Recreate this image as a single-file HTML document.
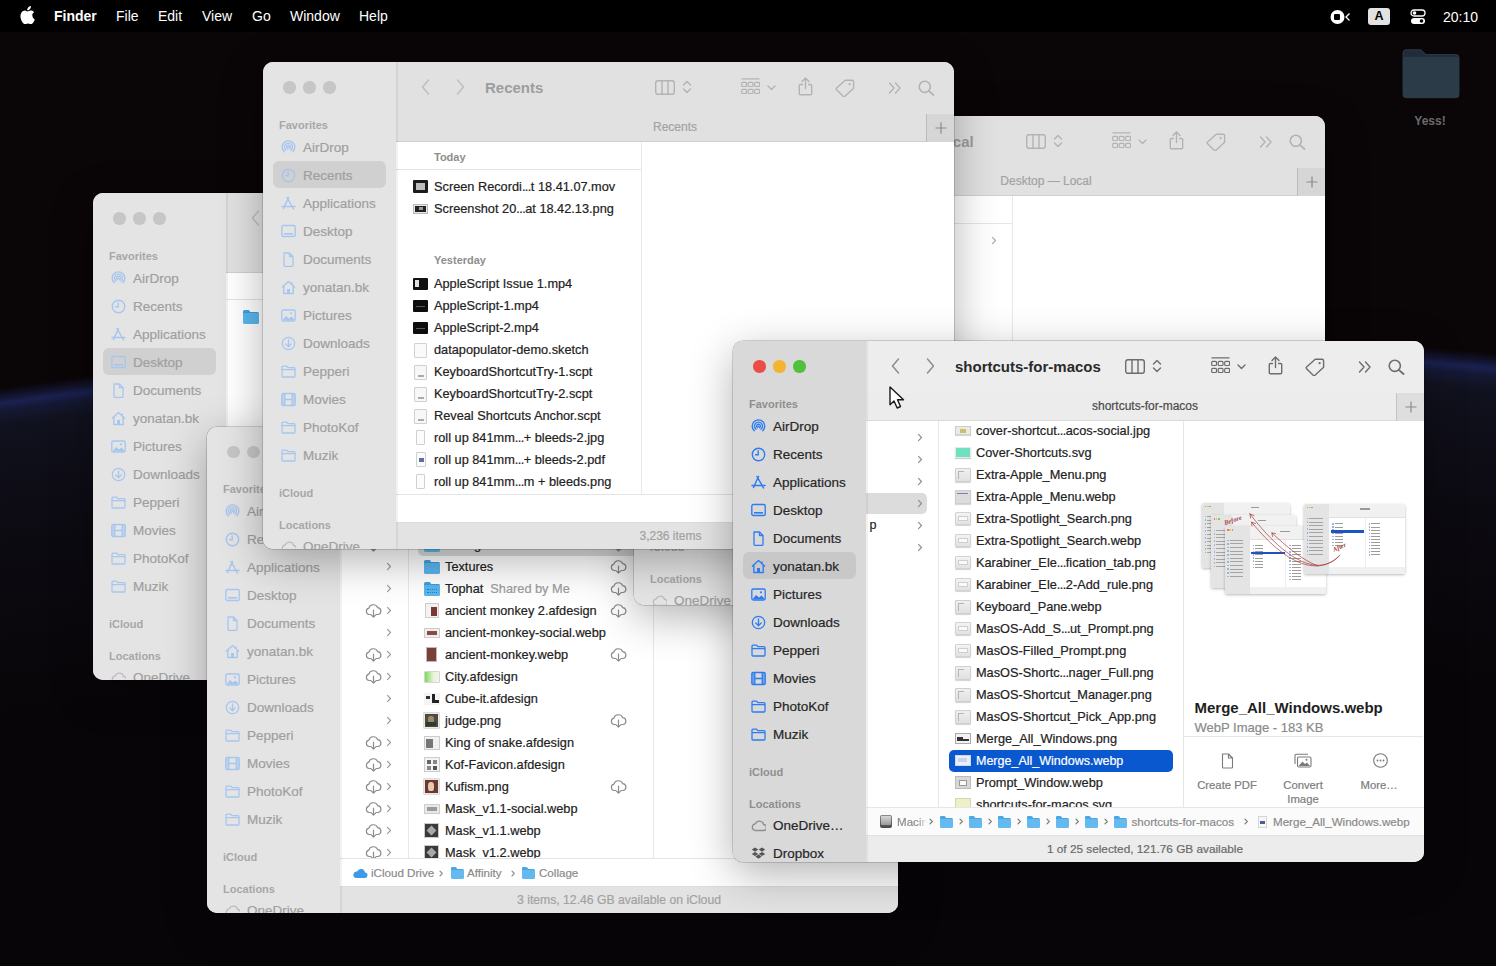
<!DOCTYPE html><html><head><meta charset="utf-8"><title>Finder</title><style>
*{box-sizing:border-box}
html,body{margin:0;padding:0}
body{width:1496px;height:966px;overflow:hidden;position:relative;font-family:"Liberation Sans", sans-serif;background:#0a0507;-webkit-text-stroke:0.2px currentColor}
.lbl,.ttl,[style*="font-weight:bold"],.mb span{-webkit-text-stroke:0}
.mb{position:absolute;left:0;top:0;width:1496px;height:32px;background:#000;color:#fff;font-size:14px;z-index:50}
.mb span{position:absolute;top:8px;line-height:16px;white-space:nowrap}
.win{position:absolute;border-radius:10px;overflow:hidden;box-shadow:0 0 0 0.5px rgba(0,0,0,0.3),0 12px 44px rgba(0,0,0,0.3);background:#fff}
.sb{position:absolute;left:0;top:0;width:134px;height:100%}
.lbl{position:absolute;left:16px;font-size:11px;font-weight:bold;line-height:14px;margin-top:-6.3px;white-space:nowrap}
.it{position:absolute;left:40px;font-size:13.5px;line-height:16px;margin-top:-7.3px;white-space:nowrap}
.sel{position:absolute;left:10px;width:113px;height:27px;border-radius:6px}
.light{position:absolute;top:19px;width:12.5px;height:12.5px;border-radius:50%}
.main{position:absolute;left:133px;top:0}
.tb{position:absolute;left:0;top:0;width:100%;height:52px}
.ttl{position:absolute;left:89px;top:17px;font-size:15px;font-weight:bold;line-height:17px;white-space:nowrap}
.tab{position:absolute;left:0;top:52px;width:100%;height:28px;border-bottom:1px solid rgba(0,0,0,0.08)}
.tabt{position:absolute;left:0;top:0;height:27px;line-height:27px;text-align:center;font-size:12px;white-space:nowrap}
.plus{position:absolute;right:0;top:0;width:28.5px;height:28px;border-left:1px solid rgba(0,0,0,0.12)}
.row{position:absolute;font-size:12.4px;line-height:16px;margin-top:-8px;white-space:nowrap;color:#222}
.fi{position:absolute;width:16px;height:13px;margin-top:-6.5px;border-radius:1.5px}
.colsep{position:absolute;top:80px;width:1px;background:#e6e6e6}
.pathbar{position:absolute;left:0;width:100%;height:28px;background:#fff;border-top:1px solid #e5e5e5}
.status{position:absolute;left:0;width:100%;height:27px;border-top:1px solid #e0e0e0;text-align:center;font-size:12px;line-height:27px;white-space:nowrap}
.chev{position:absolute}
</style></head><body>
<div style="position:absolute;left:0;top:0;width:1496px;height:966px;background:radial-gradient(circle at 899px 6863px, #080508 0px, #080508 6200px, #0c0a11 6380px, #0f0f1a 6470px, #11121f 6500px, #151833 6514px, #1a2150 6522px, #141633 6527px, #0a0507 6537px)"></div>
<div class="mb">
<svg style="position:absolute;left:19px;top:6px;" width="16" height="18" viewBox="0 0 16 18" fill="none"><path fill="#fff" d="M13.2 9.6c0-2.2 1.8-3.2 1.9-3.3-1-1.5-2.6-1.7-3.2-1.7-1.4-.1-2.6.8-3.3.8-.7 0-1.7-.8-2.8-.8C4.4 4.6 3 5.5 2.2 6.9c-1.6 2.7-.4 6.8 1.1 9 .8 1.1 1.6 2.3 2.8 2.3 1.1 0 1.5-.7 2.9-.7 1.3 0 1.7.7 2.9.7 1.2 0 1.9-1.1 2.700-2.200.8-1.200 1.200-2.400 1.200-2.500 0 0-2.300-.9-2.400-3.900zM11 3c.6-.8 1-1.8.9-2.900-.9 0-2 .6-2.700 1.400-.6.700-1.100 1.800-1 2.800 1 .1 2.100-.5 2.800-1.300z"/></svg>
<span style="left:54px;font-weight:bold">Finder</span>
<span style="left:116px">File</span>
<span style="left:158px">Edit</span>
<span style="left:202px">View</span>
<span style="left:252px">Go</span>
<span style="left:290px">Window</span>
<span style="left:359px">Help</span>
<svg style="position:absolute;left:1330px;top:8.7px;" width="22" height="16" viewBox="0 0 22 16" fill="none"><circle cx="7.5" cy="8" r="7" fill="#fff"/><rect x="4" y="5" width="6" height="6" rx="1" fill="#000"/><path d="M19.5 4.5L16 8L19.5 11.5" stroke="#fff" stroke-width="1.3" fill="none"/></svg>
<div style="position:absolute;left:1368px;top:8.3px;width:22px;height:16.5px;background:#e2e2e2;border-radius:3px;color:#000;font-weight:bold;font-size:12.5px;line-height:17px;text-align:center">A</div>
<svg style="position:absolute;left:1410px;top:8.7px;" width="16" height="16" viewBox="0 0 16 16" fill="none"><rect x="1" y="1" width="14" height="6" rx="3" stroke="#fff" stroke-width="1.3" fill="none"/><circle cx="4.5" cy="4" r="1.8" fill="#fff"/><rect x="1" y="9" width="14" height="6" rx="3" fill="#fff"/><circle cx="11.5" cy="12" r="1.8" fill="#000"/></svg>
<span style="left:1443px;top:9px">20:10</span>
</div>
<svg style="position:absolute;left:1401px;top:45.5px" width="60" height="56" viewBox="0 0 60 52" preserveAspectRatio="none"><path d="M2 6.5A3 3 0 0 1 5 3.5H20L25 8H55A3 3 0 0 1 58 11V45A3 3 0 0 1 55 48H5A3 3 0 0 1 2 45Z" fill="#1f2d3a" stroke="#34414c" stroke-width="0.8"/><path d="M2 13A3 3 0 0 1 5 10H55A3 3 0 0 1 58 13V45A3 3 0 0 1 55 48H5A3 3 0 0 1 2 45Z" fill="#2b3b48"/></svg>
<div style="position:absolute;left:1400px;top:114px;width:60px;text-align:center;color:#6a6a6a;font-weight:bold;font-size:12px;line-height:14px">Yess!</div>
<div class="win" style="left:93px;top:193px;width:690px;height:487px;z-index:1"><div class="sb" style="background:#e4e4e4"><div class="lbl" style="top:62px;color:#a7a7a7">Favorites</div><svg style="position:absolute;left:18px;top:77.5px;" width="15" height="15" viewBox="0 0 15 15" fill="none"><g stroke="#a6c6ef" stroke-width="1.4" stroke-linecap="round"><path d="M3.2 11.8 A6.3 6.3 0 1 1 11.8 11.8"/><path d="M5 10.2 A4 4 0 1 1 10 10.2"/><path d="M6.5 8.7 A1.9 1.9 0 1 1 8.5 8.7"/></g><circle cx="7.5" cy="7.3" r="0.9" fill="#a6c6ef"/></svg><div class="it" style="top:85px;color:#9f9f9f">AirDrop</div><svg style="position:absolute;left:18px;top:105.5px;" width="15" height="15" viewBox="0 0 15 15" fill="none"><g stroke="#a6c6ef" stroke-width="1.4" stroke-linecap="round"><circle cx="7.5" cy="7.5" r="6.2"/><path d="M7.2 3.8V7.7H4.6"/></g></svg><div class="it" style="top:113px;color:#9f9f9f">Recents</div><svg style="position:absolute;left:18px;top:133.5px;" width="15" height="15" viewBox="0 0 15 15" fill="none"><g stroke="#a6c6ef" stroke-width="1.5" stroke-linecap="round"><path d="M7.5 1.5L2.5 12.5"/><path d="M6 1.5L12.5 13"/><path d="M1 10.5H14"/></g></svg><div class="it" style="top:141px;color:#9f9f9f">Applications</div><div class="sel" style="top:155px;background:#d0d0d0"></div><svg style="position:absolute;left:18px;top:161.5px;" width="15" height="15" viewBox="0 0 15 15" fill="none"><g stroke="#a6c6ef" stroke-width="1.4"><rect x="0.8" y="1.5" width="13.4" height="11" rx="1.5"/></g><rect x="3" y="9" width="9" height="1.6" fill="#a6c6ef"/></svg><div class="it" style="top:169px;color:#9f9f9f">Desktop</div><svg style="position:absolute;left:18px;top:189.5px;" width="15" height="15" viewBox="0 0 15 15" fill="none"><g stroke="#a6c6ef" stroke-width="1.3" stroke-linejoin="round"><path d="M3 1H8.5L12 4.5V13.5A0.8 0.8 0 0 1 11.2 14.3H3.8A0.8 0.8 0 0 1 3 13.5Z"/><path d="M8.5 1V4.5H12"/></g></svg><div class="it" style="top:197px;color:#9f9f9f">Documents</div><svg style="position:absolute;left:18px;top:217.5px;" width="15" height="15" viewBox="0 0 15 15" fill="none"><g stroke="#a6c6ef" stroke-width="1.4" stroke-linejoin="round"><path d="M1 7.5L7.5 1.5L14 7.5"/><path d="M2.8 6V13.5H12.2V6"/><path d="M11 2.5V4.5"/></g><rect x="6" y="9" width="3" height="4.5" fill="#a6c6ef"/></svg><div class="it" style="top:225px;color:#9f9f9f">yonatan.bk</div><svg style="position:absolute;left:18px;top:245.5px;" width="15" height="15" viewBox="0 0 15 15" fill="none"><g stroke="#a6c6ef" stroke-width="1.3"><rect x="0.8" y="2" width="13.4" height="11" rx="1.5"/></g><path d="M1.5 12.3L5 8L8 10.5L10.5 8.5L13.5 11.5V12.3Z" fill="#a6c6ef"/><circle cx="10" cy="5.3" r="1.1" fill="#a6c6ef"/></svg><div class="it" style="top:253px;color:#9f9f9f">Pictures</div><svg style="position:absolute;left:18px;top:273.5px;" width="15" height="15" viewBox="0 0 15 15" fill="none"><g stroke="#a6c6ef" stroke-width="1.3" stroke-linecap="round"><circle cx="7.5" cy="7.5" r="6.2"/><path d="M7.5 3.8V10.5"/><path d="M4.8 8L7.5 10.7L10.2 8"/></g></svg><div class="it" style="top:281px;color:#9f9f9f">Downloads</div><svg style="position:absolute;left:18px;top:301.5px;" width="15" height="15" viewBox="0 0 15 15" fill="none"><g stroke="#a6c6ef" stroke-width="1.3" stroke-linejoin="round"><path d="M1 3.2A1 1 0 0 1 2 2.2H5.6L7 3.6H13A1 1 0 0 1 14 4.6V12A1 1 0 0 1 13 13H2A1 1 0 0 1 1 12Z"/><path d="M1 5.6H14"/></g></svg><div class="it" style="top:309px;color:#9f9f9f">Pepperi</div><svg style="position:absolute;left:18px;top:329.5px;" width="15" height="15" viewBox="0 0 15 15" fill="none"><g stroke="#a6c6ef" stroke-width="1.3"><rect x="0.8" y="1.5" width="13.4" height="12" rx="1.2"/><path d="M3.8 1.5V13.5M11.2 1.5V13.5M3.8 7.5H11.2"/></g><rect x="0.8" y="1.5" width="3" height="12" fill="#a6c6ef" opacity="0.6"/><rect x="11.2" y="1.5" width="3" height="12" fill="#a6c6ef" opacity="0.6"/></svg><div class="it" style="top:337px;color:#9f9f9f">Movies</div><svg style="position:absolute;left:18px;top:357.5px;" width="15" height="15" viewBox="0 0 15 15" fill="none"><g stroke="#a6c6ef" stroke-width="1.3" stroke-linejoin="round"><path d="M1 3.2A1 1 0 0 1 2 2.2H5.6L7 3.6H13A1 1 0 0 1 14 4.6V12A1 1 0 0 1 13 13H2A1 1 0 0 1 1 12Z"/><path d="M1 5.6H14"/></g></svg><div class="it" style="top:365px;color:#9f9f9f">PhotoKof</div><svg style="position:absolute;left:18px;top:385.5px;" width="15" height="15" viewBox="0 0 15 15" fill="none"><g stroke="#a6c6ef" stroke-width="1.3" stroke-linejoin="round"><path d="M1 3.2A1 1 0 0 1 2 2.2H5.6L7 3.6H13A1 1 0 0 1 14 4.6V12A1 1 0 0 1 13 13H2A1 1 0 0 1 1 12Z"/><path d="M1 5.6H14"/></g></svg><div class="it" style="top:393px;color:#9f9f9f">Muzik</div><div class="lbl" style="top:430px;color:#a7a7a7">iCloud</div><div class="lbl" style="top:462px;color:#a7a7a7">Locations</div><svg style="position:absolute;left:18px;top:476.5px;" width="15" height="15" viewBox="0 0 15 15" fill="none"><g stroke="#bdbdbd" stroke-width="1.3" stroke-linejoin="round"><path d="M4 12.5H12.3A3 3 0 0 0 12.6 6.5A4.3 4.3 0 0 0 4.4 5.8A3.4 3.4 0 0 0 4 12.5Z"/></g></svg><div class="it" style="top:484px;color:#9f9f9f">OneDrive</div><svg style="position:absolute;left:18px;top:504.5px;" width="15" height="15" viewBox="0 0 15 15" fill="none"><g fill="#bbb"><path d="M4 1.5L0.8 3.6L4 5.7L7.3 3.6Z"/><path d="M11 1.5L7.7 3.6L11 5.7L14.2 3.6Z"/><path d="M4 5.9L0.8 8L4 10.1L7.3 8Z"/><path d="M11 5.9L7.7 8L11 10.1L14.2 8Z"/><path d="M7.5 8.5L4.3 10.6L7.5 12.7L10.7 10.6Z"/></g></svg><div class="it" style="top:512px;color:#9f9f9f">Dropbox</div></div><div class="light" style="left:20px;background:#c6c6c6"></div><div class="light" style="left:40px;background:#c6c6c6"></div><div class="light" style="left:60px;background:#c6c6c6"></div><div class="main" style="width:557px;height:487px"><div style="position:absolute;left:0;top:0;width:2px;height:100%;background:rgba(0,0,0,0.055);z-index:20"></div><div class="tb" style="background:#e1e1e1"><svg style="position:absolute;left:25px;top:17px;" width="9" height="16" viewBox="0 0 9 16" fill="none"><path d="M7.5 1L1.5 8L7.5 15" stroke="#bdbdbd" stroke-width="1.4" stroke-linecap="round" stroke-linejoin="round"/></svg><svg style="position:absolute;left:60px;top:17px;" width="9" height="16" viewBox="0 0 9 16" fill="none"><path d="M1.5 1L7.5 8L1.5 15" stroke="#bdbdbd" stroke-width="1.4" stroke-linecap="round" stroke-linejoin="round"/></svg><div class="ttl" style="color:#9d9d9d;margin-left:0px">Desktop</div><div style="position:absolute;left:556px;top:25px"><svg style="position:absolute;left:-298px;top:-7.5px;" width="20" height="15" viewBox="0 0 20 15" fill="none"><rect x="0.7" y="0.7" width="18.6" height="13.6" rx="2.2" stroke="#b3b3b3" stroke-width="1.4"/><path d="M7 0.7V14.3M13 0.7V14.3" stroke="#b3b3b3" stroke-width="1.4"/></svg><svg style="position:absolute;left:-271px;top:-7px;" width="10" height="14" viewBox="0 0 10 14" fill="none"><path d="M1.5 5L5 1.5L8.5 5M1.5 9L5 12.5L8.5 9" stroke="#b3b3b3" stroke-width="1.4" stroke-linecap="round" stroke-linejoin="round"/></svg><svg style="position:absolute;left:-212px;top:-9.5px;" width="19" height="17" viewBox="0 0 19 17" fill="none"><path d="M0.5 0.8H18.5" stroke="#b3b3b3" stroke-width="1.3"/><rect x="0.7" y="4.3" width="4.8" height="4.2" rx="1" stroke="#b3b3b3" stroke-width="1.2"/><rect x="7.2" y="4.3" width="4.8" height="4.2" rx="1" stroke="#b3b3b3" stroke-width="1.2"/><rect x="13.7" y="4.3" width="4.8" height="4.2" rx="1" stroke="#b3b3b3" stroke-width="1.2"/><rect x="0.7" y="11.3" width="4.8" height="4.2" rx="1" stroke="#b3b3b3" stroke-width="1.2"/><rect x="7.2" y="11.3" width="4.8" height="4.2" rx="1" stroke="#b3b3b3" stroke-width="1.2"/><rect x="13.7" y="11.3" width="4.8" height="4.2" rx="1" stroke="#b3b3b3" stroke-width="1.2"/></svg><svg style="position:absolute;left:-186px;top:-2.5px;" width="9" height="6" viewBox="0 0 9 6" fill="none"><path d="M1 1L4.5 4.5L8 1" stroke="#b3b3b3" stroke-width="1.4" stroke-linecap="round" stroke-linejoin="round"/></svg><svg style="position:absolute;left:-155px;top:-10.5px;" width="15" height="19" viewBox="0 0 15 19" fill="none"><path d="M7.5 1V11.5M4 4.5L7.5 1L11 4.5" stroke="#b3b3b3" stroke-width="1.4" stroke-linecap="round" stroke-linejoin="round"/><path d="M5 7.5H2.3A1 1 0 0 0 1.3 8.5V16.8A1 1 0 0 0 2.3 17.8H12.7A1 1 0 0 0 13.7 16.8V8.5A1 1 0 0 0 12.7 7.5H10" stroke="#b3b3b3" stroke-width="1.4"/></svg><svg style="position:absolute;left:-118px;top:-8.5px;" width="20" height="18" viewBox="0 0 20 18" fill="none"><path d="M10.2 1.2H17A1.6 1.6 0 0 1 18.6 2.8V9.3L10 17.3A1.3 1.3 0 0 1 8.2 17.3L1.6 10.7A1.3 1.3 0 0 1 1.6 8.9Z" stroke="#b3b3b3" stroke-width="1.4" stroke-linejoin="round"/><circle cx="14.6" cy="5.2" r="1.1" fill="#b3b3b3"/></svg><svg style="position:absolute;left:-65px;top:-5.5px;" width="14" height="12" viewBox="0 0 14 12" fill="none"><path d="M1.5 1L6 6L1.5 11M7.5 1L12 6L7.5 11" stroke="#b3b3b3" stroke-width="1.4" stroke-linecap="round" stroke-linejoin="round"/></svg><svg style="position:absolute;left:-35px;top:-7.5px;" width="17" height="16" viewBox="0 0 17 16" fill="none"><circle cx="6.8" cy="6.8" r="5.6" stroke="#b3b3b3" stroke-width="1.6"/><path d="M10.8 10.8L15.5 15" stroke="#b3b3b3" stroke-width="1.8" stroke-linecap="round"/></svg></div></div><div class="tab" style="background:#e1e1e1"><div class="tabt" style="width:557px;color:#a3a3a3">Desktop</div><div class="plus" style="background:#d6d6d6"><svg style="position:absolute;left:8px;top:8px;" width="12" height="12" viewBox="0 0 12 12" fill="none"><path d="M6 0.5V11.5M0.5 6H11.5" stroke="#8a8a8a" stroke-width="1.2"/></svg></div></div><div style="position:absolute;left:0;top:80px;width:100%;height:352px;background:#fff"></div><div style="position:absolute;left:0;top:106px;width:245px;height:1px;background:#e3e3e3"></div><div style="position:absolute;left:17px;top:117px;width:16px;height:14px"><div style="position:absolute;left:0;top:0;width:7px;height:4px;background:#3fa2e0;border-radius:1.5px 2px 0 0"></div><div style="position:absolute;left:0;top:2px;width:16px;height:12px;background:#5ab6ee;border-radius:1.5px;border-top:1.5px solid #3c9ddb"></div></div></div></div>
<div class="win" style="left:207px;top:426.5px;width:691px;height:486.5px;z-index:2"><div class="sb" style="background:#e4e4e4"><div class="lbl" style="top:62px;color:#a7a7a7">Favorites</div><svg style="position:absolute;left:18px;top:77.5px;" width="15" height="15" viewBox="0 0 15 15" fill="none"><g stroke="#a6c6ef" stroke-width="1.4" stroke-linecap="round"><path d="M3.2 11.8 A6.3 6.3 0 1 1 11.8 11.8"/><path d="M5 10.2 A4 4 0 1 1 10 10.2"/><path d="M6.5 8.7 A1.9 1.9 0 1 1 8.5 8.7"/></g><circle cx="7.5" cy="7.3" r="0.9" fill="#a6c6ef"/></svg><div class="it" style="top:85px;color:#9f9f9f">AirDrop</div><svg style="position:absolute;left:18px;top:105.5px;" width="15" height="15" viewBox="0 0 15 15" fill="none"><g stroke="#a6c6ef" stroke-width="1.4" stroke-linecap="round"><circle cx="7.5" cy="7.5" r="6.2"/><path d="M7.2 3.8V7.7H4.6"/></g></svg><div class="it" style="top:113px;color:#9f9f9f">Recents</div><svg style="position:absolute;left:18px;top:133.5px;" width="15" height="15" viewBox="0 0 15 15" fill="none"><g stroke="#a6c6ef" stroke-width="1.5" stroke-linecap="round"><path d="M7.5 1.5L2.5 12.5"/><path d="M6 1.5L12.5 13"/><path d="M1 10.5H14"/></g></svg><div class="it" style="top:141px;color:#9f9f9f">Applications</div><svg style="position:absolute;left:18px;top:161.5px;" width="15" height="15" viewBox="0 0 15 15" fill="none"><g stroke="#a6c6ef" stroke-width="1.4"><rect x="0.8" y="1.5" width="13.4" height="11" rx="1.5"/></g><rect x="3" y="9" width="9" height="1.6" fill="#a6c6ef"/></svg><div class="it" style="top:169px;color:#9f9f9f">Desktop</div><svg style="position:absolute;left:18px;top:189.5px;" width="15" height="15" viewBox="0 0 15 15" fill="none"><g stroke="#a6c6ef" stroke-width="1.3" stroke-linejoin="round"><path d="M3 1H8.5L12 4.5V13.5A0.8 0.8 0 0 1 11.2 14.3H3.8A0.8 0.8 0 0 1 3 13.5Z"/><path d="M8.5 1V4.5H12"/></g></svg><div class="it" style="top:197px;color:#9f9f9f">Documents</div><svg style="position:absolute;left:18px;top:217.5px;" width="15" height="15" viewBox="0 0 15 15" fill="none"><g stroke="#a6c6ef" stroke-width="1.4" stroke-linejoin="round"><path d="M1 7.5L7.5 1.5L14 7.5"/><path d="M2.8 6V13.5H12.2V6"/><path d="M11 2.5V4.5"/></g><rect x="6" y="9" width="3" height="4.5" fill="#a6c6ef"/></svg><div class="it" style="top:225px;color:#9f9f9f">yonatan.bk</div><svg style="position:absolute;left:18px;top:245.5px;" width="15" height="15" viewBox="0 0 15 15" fill="none"><g stroke="#a6c6ef" stroke-width="1.3"><rect x="0.8" y="2" width="13.4" height="11" rx="1.5"/></g><path d="M1.5 12.3L5 8L8 10.5L10.5 8.5L13.5 11.5V12.3Z" fill="#a6c6ef"/><circle cx="10" cy="5.3" r="1.1" fill="#a6c6ef"/></svg><div class="it" style="top:253px;color:#9f9f9f">Pictures</div><svg style="position:absolute;left:18px;top:273.5px;" width="15" height="15" viewBox="0 0 15 15" fill="none"><g stroke="#a6c6ef" stroke-width="1.3" stroke-linecap="round"><circle cx="7.5" cy="7.5" r="6.2"/><path d="M7.5 3.8V10.5"/><path d="M4.8 8L7.5 10.7L10.2 8"/></g></svg><div class="it" style="top:281px;color:#9f9f9f">Downloads</div><svg style="position:absolute;left:18px;top:301.5px;" width="15" height="15" viewBox="0 0 15 15" fill="none"><g stroke="#a6c6ef" stroke-width="1.3" stroke-linejoin="round"><path d="M1 3.2A1 1 0 0 1 2 2.2H5.6L7 3.6H13A1 1 0 0 1 14 4.6V12A1 1 0 0 1 13 13H2A1 1 0 0 1 1 12Z"/><path d="M1 5.6H14"/></g></svg><div class="it" style="top:309px;color:#9f9f9f">Pepperi</div><svg style="position:absolute;left:18px;top:329.5px;" width="15" height="15" viewBox="0 0 15 15" fill="none"><g stroke="#a6c6ef" stroke-width="1.3"><rect x="0.8" y="1.5" width="13.4" height="12" rx="1.2"/><path d="M3.8 1.5V13.5M11.2 1.5V13.5M3.8 7.5H11.2"/></g><rect x="0.8" y="1.5" width="3" height="12" fill="#a6c6ef" opacity="0.6"/><rect x="11.2" y="1.5" width="3" height="12" fill="#a6c6ef" opacity="0.6"/></svg><div class="it" style="top:337px;color:#9f9f9f">Movies</div><svg style="position:absolute;left:18px;top:357.5px;" width="15" height="15" viewBox="0 0 15 15" fill="none"><g stroke="#a6c6ef" stroke-width="1.3" stroke-linejoin="round"><path d="M1 3.2A1 1 0 0 1 2 2.2H5.6L7 3.6H13A1 1 0 0 1 14 4.6V12A1 1 0 0 1 13 13H2A1 1 0 0 1 1 12Z"/><path d="M1 5.6H14"/></g></svg><div class="it" style="top:365px;color:#9f9f9f">PhotoKof</div><svg style="position:absolute;left:18px;top:385.5px;" width="15" height="15" viewBox="0 0 15 15" fill="none"><g stroke="#a6c6ef" stroke-width="1.3" stroke-linejoin="round"><path d="M1 3.2A1 1 0 0 1 2 2.2H5.6L7 3.6H13A1 1 0 0 1 14 4.6V12A1 1 0 0 1 13 13H2A1 1 0 0 1 1 12Z"/><path d="M1 5.6H14"/></g></svg><div class="it" style="top:393px;color:#9f9f9f">Muzik</div><div class="lbl" style="top:430px;color:#a7a7a7">iCloud</div><div class="lbl" style="top:462px;color:#a7a7a7">Locations</div><svg style="position:absolute;left:18px;top:476.5px;" width="15" height="15" viewBox="0 0 15 15" fill="none"><g stroke="#bdbdbd" stroke-width="1.3" stroke-linejoin="round"><path d="M4 12.5H12.3A3 3 0 0 0 12.6 6.5A4.3 4.3 0 0 0 4.4 5.8A3.4 3.4 0 0 0 4 12.5Z"/></g></svg><div class="it" style="top:484px;color:#9f9f9f">OneDrive</div><svg style="position:absolute;left:18px;top:504.5px;" width="15" height="15" viewBox="0 0 15 15" fill="none"><g fill="#bbb"><path d="M4 1.5L0.8 3.6L4 5.7L7.3 3.6Z"/><path d="M11 1.5L7.7 3.6L11 5.7L14.2 3.6Z"/><path d="M4 5.9L0.8 8L4 10.1L7.3 8Z"/><path d="M11 5.9L7.7 8L11 10.1L14.2 8Z"/><path d="M7.5 8.5L4.3 10.6L7.5 12.7L10.7 10.6Z"/></g></svg><div class="it" style="top:512px;color:#9f9f9f">Dropbox</div></div><div class="light" style="left:20px;background:#c6c6c6"></div><div class="light" style="left:40px;background:#c6c6c6"></div><div class="light" style="left:60px;background:#c6c6c6"></div><div class="main" style="width:558px;height:486.5px"><div style="position:absolute;left:0;top:0;width:2px;height:100%;background:rgba(0,0,0,0.055);z-index:20"></div><div class="tb" style="background:#e1e1e1"><svg style="position:absolute;left:25px;top:17px;" width="9" height="16" viewBox="0 0 9 16" fill="none"><path d="M7.5 1L1.5 8L7.5 15" stroke="#bdbdbd" stroke-width="1.4" stroke-linecap="round" stroke-linejoin="round"/></svg><svg style="position:absolute;left:60px;top:17px;" width="9" height="16" viewBox="0 0 9 16" fill="none"><path d="M1.5 1L7.5 8L1.5 15" stroke="#bdbdbd" stroke-width="1.4" stroke-linecap="round" stroke-linejoin="round"/></svg><div class="ttl" style="color:#9d9d9d;margin-left:0px">Collage</div><div style="position:absolute;left:557px;top:25px"><svg style="position:absolute;left:-298px;top:-7.5px;" width="20" height="15" viewBox="0 0 20 15" fill="none"><rect x="0.7" y="0.7" width="18.6" height="13.6" rx="2.2" stroke="#b3b3b3" stroke-width="1.4"/><path d="M7 0.7V14.3M13 0.7V14.3" stroke="#b3b3b3" stroke-width="1.4"/></svg><svg style="position:absolute;left:-271px;top:-7px;" width="10" height="14" viewBox="0 0 10 14" fill="none"><path d="M1.5 5L5 1.5L8.5 5M1.5 9L5 12.5L8.5 9" stroke="#b3b3b3" stroke-width="1.4" stroke-linecap="round" stroke-linejoin="round"/></svg><svg style="position:absolute;left:-212px;top:-9.5px;" width="19" height="17" viewBox="0 0 19 17" fill="none"><path d="M0.5 0.8H18.5" stroke="#b3b3b3" stroke-width="1.3"/><rect x="0.7" y="4.3" width="4.8" height="4.2" rx="1" stroke="#b3b3b3" stroke-width="1.2"/><rect x="7.2" y="4.3" width="4.8" height="4.2" rx="1" stroke="#b3b3b3" stroke-width="1.2"/><rect x="13.7" y="4.3" width="4.8" height="4.2" rx="1" stroke="#b3b3b3" stroke-width="1.2"/><rect x="0.7" y="11.3" width="4.8" height="4.2" rx="1" stroke="#b3b3b3" stroke-width="1.2"/><rect x="7.2" y="11.3" width="4.8" height="4.2" rx="1" stroke="#b3b3b3" stroke-width="1.2"/><rect x="13.7" y="11.3" width="4.8" height="4.2" rx="1" stroke="#b3b3b3" stroke-width="1.2"/></svg><svg style="position:absolute;left:-186px;top:-2.5px;" width="9" height="6" viewBox="0 0 9 6" fill="none"><path d="M1 1L4.5 4.5L8 1" stroke="#b3b3b3" stroke-width="1.4" stroke-linecap="round" stroke-linejoin="round"/></svg><svg style="position:absolute;left:-155px;top:-10.5px;" width="15" height="19" viewBox="0 0 15 19" fill="none"><path d="M7.5 1V11.5M4 4.5L7.5 1L11 4.5" stroke="#b3b3b3" stroke-width="1.4" stroke-linecap="round" stroke-linejoin="round"/><path d="M5 7.5H2.3A1 1 0 0 0 1.3 8.5V16.8A1 1 0 0 0 2.3 17.8H12.7A1 1 0 0 0 13.7 16.8V8.5A1 1 0 0 0 12.7 7.5H10" stroke="#b3b3b3" stroke-width="1.4"/></svg><svg style="position:absolute;left:-118px;top:-8.5px;" width="20" height="18" viewBox="0 0 20 18" fill="none"><path d="M10.2 1.2H17A1.6 1.6 0 0 1 18.6 2.8V9.3L10 17.3A1.3 1.3 0 0 1 8.2 17.3L1.6 10.7A1.3 1.3 0 0 1 1.6 8.9Z" stroke="#b3b3b3" stroke-width="1.4" stroke-linejoin="round"/><circle cx="14.6" cy="5.2" r="1.1" fill="#b3b3b3"/></svg><svg style="position:absolute;left:-65px;top:-5.5px;" width="14" height="12" viewBox="0 0 14 12" fill="none"><path d="M1.5 1L6 6L1.5 11M7.5 1L12 6L7.5 11" stroke="#b3b3b3" stroke-width="1.4" stroke-linecap="round" stroke-linejoin="round"/></svg><svg style="position:absolute;left:-35px;top:-7.5px;" width="17" height="16" viewBox="0 0 17 16" fill="none"><circle cx="6.8" cy="6.8" r="5.6" stroke="#b3b3b3" stroke-width="1.6"/><path d="M10.8 10.8L15.5 15" stroke="#b3b3b3" stroke-width="1.8" stroke-linecap="round"/></svg></div></div><div class="tab" style="background:#e1e1e1"><div class="tabt" style="width:558px;color:#a3a3a3">Collage</div><div class="plus" style="background:#d6d6d6"><svg style="position:absolute;left:8px;top:8px;" width="12" height="12" viewBox="0 0 12 12" fill="none"><path d="M6 0.5V11.5M0.5 6H11.5" stroke="#8a8a8a" stroke-width="1.2"/></svg></div></div><div style="position:absolute;left:0;top:80px;width:100%;height:351.5px;background:#fff"></div><div style="position:absolute;left:68px;top:80px;width:1px;height:351.5px;background:#e8e8e8"></div><div style="position:absolute;left:313px;top:80px;width:1px;height:351.5px;background:#e8e8e8"></div><div style="position:absolute;left:78px;top:107px;width:228px;height:22px;border-radius:5px;background:#dcdcdc"></div><svg style="position:absolute;left:25px;top:88.5px;" width="17" height="15" viewBox="0 0 17 15" fill="none"><path d="M5.5 11.5H4.2A3.2 3.2 0 0 1 3.9 5.2A4.6 4.6 0 0 1 12.6 4.6A3.5 3.5 0 0 1 13.2 11.5H11.5" stroke="#8c8c8c" stroke-width="1.2" stroke-linecap="round" stroke-linejoin="round"/><path d="M8.5 7V14M6.2 11.8L8.5 14.1L10.8 11.8" stroke="#8c8c8c" stroke-width="1.2" stroke-linecap="round" stroke-linejoin="round"/></svg><svg style="position:absolute;left:46px;top:91.5px;" width="6" height="9" viewBox="0 0 6 9" fill="none"><path d="M1.5 1.3L4.5 4.5L1.5 7.7" stroke="#9a9a9a" stroke-width="1.1" stroke-linecap="round" stroke-linejoin="round"/></svg><svg style="position:absolute;left:25px;top:110.5px;" width="17" height="15" viewBox="0 0 17 15" fill="none"><path d="M5.5 11.5H4.2A3.2 3.2 0 0 1 3.9 5.2A4.6 4.6 0 0 1 12.6 4.6A3.5 3.5 0 0 1 13.2 11.5H11.5" stroke="#8c8c8c" stroke-width="1.2" stroke-linecap="round" stroke-linejoin="round"/><path d="M8.5 7V14M6.2 11.8L8.5 14.1L10.8 11.8" stroke="#8c8c8c" stroke-width="1.2" stroke-linecap="round" stroke-linejoin="round"/></svg><svg style="position:absolute;left:46px;top:113.5px;" width="6" height="9" viewBox="0 0 6 9" fill="none"><path d="M1.5 1.3L4.5 4.5L1.5 7.7" stroke="#9a9a9a" stroke-width="1.1" stroke-linecap="round" stroke-linejoin="round"/></svg><svg style="position:absolute;left:46px;top:135.5px;" width="6" height="9" viewBox="0 0 6 9" fill="none"><path d="M1.5 1.3L4.5 4.5L1.5 7.7" stroke="#9a9a9a" stroke-width="1.1" stroke-linecap="round" stroke-linejoin="round"/></svg><svg style="position:absolute;left:46px;top:157.5px;" width="6" height="9" viewBox="0 0 6 9" fill="none"><path d="M1.5 1.3L4.5 4.5L1.5 7.7" stroke="#9a9a9a" stroke-width="1.1" stroke-linecap="round" stroke-linejoin="round"/></svg><svg style="position:absolute;left:25px;top:176.5px;" width="17" height="15" viewBox="0 0 17 15" fill="none"><path d="M5.5 11.5H4.2A3.2 3.2 0 0 1 3.9 5.2A4.6 4.6 0 0 1 12.6 4.6A3.5 3.5 0 0 1 13.2 11.5H11.5" stroke="#8c8c8c" stroke-width="1.2" stroke-linecap="round" stroke-linejoin="round"/><path d="M8.5 7V14M6.2 11.8L8.5 14.1L10.8 11.8" stroke="#8c8c8c" stroke-width="1.2" stroke-linecap="round" stroke-linejoin="round"/></svg><svg style="position:absolute;left:46px;top:179.5px;" width="6" height="9" viewBox="0 0 6 9" fill="none"><path d="M1.5 1.3L4.5 4.5L1.5 7.7" stroke="#9a9a9a" stroke-width="1.1" stroke-linecap="round" stroke-linejoin="round"/></svg><svg style="position:absolute;left:46px;top:201.5px;" width="6" height="9" viewBox="0 0 6 9" fill="none"><path d="M1.5 1.3L4.5 4.5L1.5 7.7" stroke="#9a9a9a" stroke-width="1.1" stroke-linecap="round" stroke-linejoin="round"/></svg><svg style="position:absolute;left:25px;top:220.5px;" width="17" height="15" viewBox="0 0 17 15" fill="none"><path d="M5.5 11.5H4.2A3.2 3.2 0 0 1 3.9 5.2A4.6 4.6 0 0 1 12.6 4.6A3.5 3.5 0 0 1 13.2 11.5H11.5" stroke="#8c8c8c" stroke-width="1.2" stroke-linecap="round" stroke-linejoin="round"/><path d="M8.5 7V14M6.2 11.8L8.5 14.1L10.8 11.8" stroke="#8c8c8c" stroke-width="1.2" stroke-linecap="round" stroke-linejoin="round"/></svg><svg style="position:absolute;left:46px;top:223.5px;" width="6" height="9" viewBox="0 0 6 9" fill="none"><path d="M1.5 1.3L4.5 4.5L1.5 7.7" stroke="#9a9a9a" stroke-width="1.1" stroke-linecap="round" stroke-linejoin="round"/></svg><svg style="position:absolute;left:25px;top:242.5px;" width="17" height="15" viewBox="0 0 17 15" fill="none"><path d="M5.5 11.5H4.2A3.2 3.2 0 0 1 3.9 5.2A4.6 4.6 0 0 1 12.6 4.6A3.5 3.5 0 0 1 13.2 11.5H11.5" stroke="#8c8c8c" stroke-width="1.2" stroke-linecap="round" stroke-linejoin="round"/><path d="M8.5 7V14M6.2 11.8L8.5 14.1L10.8 11.8" stroke="#8c8c8c" stroke-width="1.2" stroke-linecap="round" stroke-linejoin="round"/></svg><svg style="position:absolute;left:46px;top:245.5px;" width="6" height="9" viewBox="0 0 6 9" fill="none"><path d="M1.5 1.3L4.5 4.5L1.5 7.7" stroke="#9a9a9a" stroke-width="1.1" stroke-linecap="round" stroke-linejoin="round"/></svg><svg style="position:absolute;left:46px;top:267.5px;" width="6" height="9" viewBox="0 0 6 9" fill="none"><path d="M1.5 1.3L4.5 4.5L1.5 7.7" stroke="#9a9a9a" stroke-width="1.1" stroke-linecap="round" stroke-linejoin="round"/></svg><svg style="position:absolute;left:46px;top:289.5px;" width="6" height="9" viewBox="0 0 6 9" fill="none"><path d="M1.5 1.3L4.5 4.5L1.5 7.7" stroke="#9a9a9a" stroke-width="1.1" stroke-linecap="round" stroke-linejoin="round"/></svg><svg style="position:absolute;left:25px;top:308.5px;" width="17" height="15" viewBox="0 0 17 15" fill="none"><path d="M5.5 11.5H4.2A3.2 3.2 0 0 1 3.9 5.2A4.6 4.6 0 0 1 12.6 4.6A3.5 3.5 0 0 1 13.2 11.5H11.5" stroke="#8c8c8c" stroke-width="1.2" stroke-linecap="round" stroke-linejoin="round"/><path d="M8.5 7V14M6.2 11.8L8.5 14.1L10.8 11.8" stroke="#8c8c8c" stroke-width="1.2" stroke-linecap="round" stroke-linejoin="round"/></svg><svg style="position:absolute;left:46px;top:311.5px;" width="6" height="9" viewBox="0 0 6 9" fill="none"><path d="M1.5 1.3L4.5 4.5L1.5 7.7" stroke="#9a9a9a" stroke-width="1.1" stroke-linecap="round" stroke-linejoin="round"/></svg><svg style="position:absolute;left:25px;top:330.5px;" width="17" height="15" viewBox="0 0 17 15" fill="none"><path d="M5.5 11.5H4.2A3.2 3.2 0 0 1 3.9 5.2A4.6 4.6 0 0 1 12.6 4.6A3.5 3.5 0 0 1 13.2 11.5H11.5" stroke="#8c8c8c" stroke-width="1.2" stroke-linecap="round" stroke-linejoin="round"/><path d="M8.5 7V14M6.2 11.8L8.5 14.1L10.8 11.8" stroke="#8c8c8c" stroke-width="1.2" stroke-linecap="round" stroke-linejoin="round"/></svg><svg style="position:absolute;left:46px;top:333.5px;" width="6" height="9" viewBox="0 0 6 9" fill="none"><path d="M1.5 1.3L4.5 4.5L1.5 7.7" stroke="#9a9a9a" stroke-width="1.1" stroke-linecap="round" stroke-linejoin="round"/></svg><svg style="position:absolute;left:25px;top:352.5px;" width="17" height="15" viewBox="0 0 17 15" fill="none"><path d="M5.5 11.5H4.2A3.2 3.2 0 0 1 3.9 5.2A4.6 4.6 0 0 1 12.6 4.6A3.5 3.5 0 0 1 13.2 11.5H11.5" stroke="#8c8c8c" stroke-width="1.2" stroke-linecap="round" stroke-linejoin="round"/><path d="M8.5 7V14M6.2 11.8L8.5 14.1L10.8 11.8" stroke="#8c8c8c" stroke-width="1.2" stroke-linecap="round" stroke-linejoin="round"/></svg><svg style="position:absolute;left:46px;top:355.5px;" width="6" height="9" viewBox="0 0 6 9" fill="none"><path d="M1.5 1.3L4.5 4.5L1.5 7.7" stroke="#9a9a9a" stroke-width="1.1" stroke-linecap="round" stroke-linejoin="round"/></svg><svg style="position:absolute;left:25px;top:374.5px;" width="17" height="15" viewBox="0 0 17 15" fill="none"><path d="M5.5 11.5H4.2A3.2 3.2 0 0 1 3.9 5.2A4.6 4.6 0 0 1 12.6 4.6A3.5 3.5 0 0 1 13.2 11.5H11.5" stroke="#8c8c8c" stroke-width="1.2" stroke-linecap="round" stroke-linejoin="round"/><path d="M8.5 7V14M6.2 11.8L8.5 14.1L10.8 11.8" stroke="#8c8c8c" stroke-width="1.2" stroke-linecap="round" stroke-linejoin="round"/></svg><svg style="position:absolute;left:46px;top:377.5px;" width="6" height="9" viewBox="0 0 6 9" fill="none"><path d="M1.5 1.3L4.5 4.5L1.5 7.7" stroke="#9a9a9a" stroke-width="1.1" stroke-linecap="round" stroke-linejoin="round"/></svg><svg style="position:absolute;left:25px;top:396.5px;" width="17" height="15" viewBox="0 0 17 15" fill="none"><path d="M5.5 11.5H4.2A3.2 3.2 0 0 1 3.9 5.2A4.6 4.6 0 0 1 12.6 4.6A3.5 3.5 0 0 1 13.2 11.5H11.5" stroke="#8c8c8c" stroke-width="1.2" stroke-linecap="round" stroke-linejoin="round"/><path d="M8.5 7V14M6.2 11.8L8.5 14.1L10.8 11.8" stroke="#8c8c8c" stroke-width="1.2" stroke-linecap="round" stroke-linejoin="round"/></svg><svg style="position:absolute;left:46px;top:399.5px;" width="6" height="9" viewBox="0 0 6 9" fill="none"><path d="M1.5 1.3L4.5 4.5L1.5 7.7" stroke="#9a9a9a" stroke-width="1.1" stroke-linecap="round" stroke-linejoin="round"/></svg><svg style="position:absolute;left:25px;top:418.5px;" width="17" height="15" viewBox="0 0 17 15" fill="none"><path d="M5.5 11.5H4.2A3.2 3.2 0 0 1 3.9 5.2A4.6 4.6 0 0 1 12.6 4.6A3.5 3.5 0 0 1 13.2 11.5H11.5" stroke="#8c8c8c" stroke-width="1.2" stroke-linecap="round" stroke-linejoin="round"/><path d="M8.5 7V14M6.2 11.8L8.5 14.1L10.8 11.8" stroke="#8c8c8c" stroke-width="1.2" stroke-linecap="round" stroke-linejoin="round"/></svg><svg style="position:absolute;left:46px;top:421.5px;" width="6" height="9" viewBox="0 0 6 9" fill="none"><path d="M1.5 1.3L4.5 4.5L1.5 7.7" stroke="#9a9a9a" stroke-width="1.1" stroke-linecap="round" stroke-linejoin="round"/></svg><div style="position:absolute;left:84px;top:89px;width:16px;height:14px"><div style="position:absolute;left:0;top:0;width:7px;height:4px;background:#3fa2e0;border-radius:1.5px 2px 0 0"></div><div style="position:absolute;left:0;top:2px;width:16px;height:12px;background:#5ab6ee;border-radius:1.5px;border-top:1.5px solid #3c9ddb"></div></div><div style="position:absolute;left:105px;top:87px;line-height:18px;font-size:12.75px;color:#222;font-weight:normal;white-space:nowrap;">Affinity</div><div style="position:absolute;left:84px;top:111px;width:16px;height:14px"><div style="position:absolute;left:0;top:0;width:7px;height:4px;background:#3fa2e0;border-radius:1.5px 2px 0 0"></div><div style="position:absolute;left:0;top:2px;width:16px;height:12px;background:#5ab6ee;border-radius:1.5px;border-top:1.5px solid #3c9ddb"></div></div><div style="position:absolute;left:105px;top:109px;line-height:18px;font-size:12.75px;color:#222;font-weight:normal;white-space:nowrap;">Collage</div><svg style="position:absolute;left:270px;top:110.5px;" width="17" height="15" viewBox="0 0 17 15" fill="none"><path d="M5.5 11.5H4.2A3.2 3.2 0 0 1 3.9 5.2A4.6 4.6 0 0 1 12.6 4.6A3.5 3.5 0 0 1 13.2 11.5H11.5" stroke="#8c8c8c" stroke-width="1.2" stroke-linecap="round" stroke-linejoin="round"/><path d="M8.5 7V14M6.2 11.8L8.5 14.1L10.8 11.8" stroke="#8c8c8c" stroke-width="1.2" stroke-linecap="round" stroke-linejoin="round"/></svg><div style="position:absolute;left:84px;top:133px;width:16px;height:14px"><div style="position:absolute;left:0;top:0;width:7px;height:4px;background:#3fa2e0;border-radius:1.5px 2px 0 0"></div><div style="position:absolute;left:0;top:2px;width:16px;height:12px;background:#5ab6ee;border-radius:1.5px;border-top:1.5px solid #3c9ddb"></div></div><div style="position:absolute;left:105px;top:131px;line-height:18px;font-size:12.75px;color:#222;font-weight:normal;white-space:nowrap;">Textures</div><svg style="position:absolute;left:270px;top:132.5px;" width="17" height="15" viewBox="0 0 17 15" fill="none"><path d="M5.5 11.5H4.2A3.2 3.2 0 0 1 3.9 5.2A4.6 4.6 0 0 1 12.6 4.6A3.5 3.5 0 0 1 13.2 11.5H11.5" stroke="#8c8c8c" stroke-width="1.2" stroke-linecap="round" stroke-linejoin="round"/><path d="M8.5 7V14M6.2 11.8L8.5 14.1L10.8 11.8" stroke="#8c8c8c" stroke-width="1.2" stroke-linecap="round" stroke-linejoin="round"/></svg><div style="position:absolute;left:84px;top:155px;width:16px;height:14px"><div style="position:absolute;left:0;top:0;width:7px;height:4px;background:#3fa2e0;border-radius:1.5px 2px 0 0"></div><div style="position:absolute;left:0;top:2px;width:16px;height:12px;background:#5ab6ee;border-radius:1.5px;border-top:1.5px solid #3c9ddb"></div><div style="position:absolute;left:3px;top:7px;width:10px;height:4px;border-top:1px dotted #2a7fc0;border-bottom:1px dotted #2a7fc0"></div></div><div style="position:absolute;left:105px;top:153px;line-height:18px;font-size:12.75px;color:#222;font-weight:normal;white-space:nowrap;">Tophat <span style="color:#9c9c9c">&nbsp;Shared by Me</span></div><svg style="position:absolute;left:270px;top:154.5px;" width="17" height="15" viewBox="0 0 17 15" fill="none"><path d="M5.5 11.5H4.2A3.2 3.2 0 0 1 3.9 5.2A4.6 4.6 0 0 1 12.6 4.6A3.5 3.5 0 0 1 13.2 11.5H11.5" stroke="#8c8c8c" stroke-width="1.2" stroke-linecap="round" stroke-linejoin="round"/><path d="M8.5 7V14M6.2 11.8L8.5 14.1L10.8 11.8" stroke="#8c8c8c" stroke-width="1.2" stroke-linecap="round" stroke-linejoin="round"/></svg><div style="position:absolute;left:85px;top:176.5px;width:14px;height:15px;background:#f3f3f3;border:1px solid #ccc"><div style="position:absolute;left:5px;top:3px;width:6px;height:9px;background:#7a3a34"></div></div><div style="position:absolute;left:105px;top:175px;line-height:18px;font-size:12.75px;color:#222;font-weight:normal;white-space:nowrap;">ancient monkey 2.afdesign</div><svg style="position:absolute;left:270px;top:176.5px;" width="17" height="15" viewBox="0 0 17 15" fill="none"><path d="M5.5 11.5H4.2A3.2 3.2 0 0 1 3.9 5.2A4.6 4.6 0 0 1 12.6 4.6A3.5 3.5 0 0 1 13.2 11.5H11.5" stroke="#8c8c8c" stroke-width="1.2" stroke-linecap="round" stroke-linejoin="round"/><path d="M8.5 7V14M6.2 11.8L8.5 14.1L10.8 11.8" stroke="#8c8c8c" stroke-width="1.2" stroke-linecap="round" stroke-linejoin="round"/></svg><div style="position:absolute;left:84px;top:201px;width:16px;height:10px;background:#eee;border:1px solid #ccc"><div style="position:absolute;left:2px;top:2px;width:10px;height:4px;background:#8a4a44"></div></div><div style="position:absolute;left:105px;top:197px;line-height:18px;font-size:12.75px;color:#222;font-weight:normal;white-space:nowrap;">ancient-monkey-social.webp</div><div style="position:absolute;left:86px;top:220.5px;width:11px;height:15px;background:#7a4038;border:1px solid #bbb"></div><div style="position:absolute;left:105px;top:219px;line-height:18px;font-size:12.75px;color:#222;font-weight:normal;white-space:nowrap;">ancient-monkey.webp</div><svg style="position:absolute;left:270px;top:220.5px;" width="17" height="15" viewBox="0 0 17 15" fill="none"><path d="M5.5 11.5H4.2A3.2 3.2 0 0 1 3.9 5.2A4.6 4.6 0 0 1 12.6 4.6A3.5 3.5 0 0 1 13.2 11.5H11.5" stroke="#8c8c8c" stroke-width="1.2" stroke-linecap="round" stroke-linejoin="round"/><path d="M8.5 7V14M6.2 11.8L8.5 14.1L10.8 11.8" stroke="#8c8c8c" stroke-width="1.2" stroke-linecap="round" stroke-linejoin="round"/></svg><div style="position:absolute;left:84px;top:244px;width:16px;height:12px;background:linear-gradient(90deg,#7ed957,#e8f4d8 60%,#f3f3f3);border:1px solid #d5d5d5;border-radius:1px"></div><div style="position:absolute;left:105px;top:241px;line-height:18px;font-size:12.75px;color:#222;font-weight:normal;white-space:nowrap;">City.afdesign</div><div style="position:absolute;left:84px;top:266px;width:16px;height:12px;background:#f4f4f4"><div style="position:absolute;left:2px;top:3px;width:4px;height:3px;background:#333"></div><div style="position:absolute;left:8px;top:1px;width:3px;height:9px;background:#222"></div><div style="position:absolute;left:8px;top:7px;width:7px;height:3px;background:#222"></div></div><div style="position:absolute;left:105px;top:263px;line-height:18px;font-size:12.75px;color:#222;font-weight:normal;white-space:nowrap;">Cube-it.afdesign</div><div style="position:absolute;left:84px;top:286.5px;width:15px;height:15px;background:#4e4a3c;border:1.5px solid #e8e8e8;box-shadow:0 0 0 0.5px #bbb"><div style="position:absolute;left:3px;top:2px;width:6px;height:7px;background:#a08870;border-radius:40%"></div><div style="position:absolute;left:1px;top:8px;width:10px;height:4px;background:#2e3a2a"></div></div><div style="position:absolute;left:105px;top:285px;line-height:18px;font-size:12.75px;color:#222;font-weight:normal;white-space:nowrap;">judge.png</div><svg style="position:absolute;left:270px;top:286.5px;" width="17" height="15" viewBox="0 0 17 15" fill="none"><path d="M5.5 11.5H4.2A3.2 3.2 0 0 1 3.9 5.2A4.6 4.6 0 0 1 12.6 4.6A3.5 3.5 0 0 1 13.2 11.5H11.5" stroke="#8c8c8c" stroke-width="1.2" stroke-linecap="round" stroke-linejoin="round"/><path d="M8.5 7V14M6.2 11.8L8.5 14.1L10.8 11.8" stroke="#8c8c8c" stroke-width="1.2" stroke-linecap="round" stroke-linejoin="round"/></svg><div style="position:absolute;left:84px;top:309px;width:16px;height:14px;background:#f1f1f1;border:1px solid #ccc"><div style="position:absolute;left:1px;top:2px;width:7px;height:9px;background:#777"></div></div><div style="position:absolute;left:105px;top:307px;line-height:18px;font-size:12.75px;color:#222;font-weight:normal;white-space:nowrap;">King of snake.afdesign</div><div style="position:absolute;left:84px;top:330.5px;width:16px;height:15px;background:#f4f4f4;border:1px solid #ccc"><div style="position:absolute;left:2px;top:2px;width:4px;height:4px;background:#666"></div><div style="position:absolute;left:8px;top:2px;width:4px;height:4px;background:#888"></div><div style="position:absolute;left:2px;top:8px;width:4px;height:4px;background:#888"></div><div style="position:absolute;left:8px;top:8px;width:4px;height:4px;background:#555"></div></div><div style="position:absolute;left:105px;top:329px;line-height:18px;font-size:12.75px;color:#222;font-weight:normal;white-space:nowrap;">Kof-Favicon.afdesign</div><div style="position:absolute;left:84px;top:352.5px;width:15px;height:15px;background:#6a3a30;border:1.5px solid #e8e8e8;box-shadow:0 0 0 0.5px #bbb"><div style="position:absolute;left:3px;top:2px;width:6px;height:9px;background:#e8c8b0;border-radius:40%"></div></div><div style="position:absolute;left:105px;top:351px;line-height:18px;font-size:12.75px;color:#222;font-weight:normal;white-space:nowrap;">Kufism.png</div><svg style="position:absolute;left:270px;top:352.5px;" width="17" height="15" viewBox="0 0 17 15" fill="none"><path d="M5.5 11.5H4.2A3.2 3.2 0 0 1 3.9 5.2A4.6 4.6 0 0 1 12.6 4.6A3.5 3.5 0 0 1 13.2 11.5H11.5" stroke="#8c8c8c" stroke-width="1.2" stroke-linecap="round" stroke-linejoin="round"/><path d="M8.5 7V14M6.2 11.8L8.5 14.1L10.8 11.8" stroke="#8c8c8c" stroke-width="1.2" stroke-linecap="round" stroke-linejoin="round"/></svg><div style="position:absolute;left:84px;top:377px;width:16px;height:10px;background:#e8e8e8;border:1px solid #ccc"><div style="position:absolute;left:2px;top:2px;width:10px;height:4px;background:#9a9a9a"></div></div><div style="position:absolute;left:105px;top:373px;line-height:18px;font-size:12.75px;color:#222;font-weight:normal;white-space:nowrap;">Mask_v1.1-social.webp</div><div style="position:absolute;left:84px;top:396.5px;width:15px;height:15px;background:#3a3a3a;border:1px solid #ccc"><div style="position:absolute;left:3px;top:3px;width:7px;height:7px;background:#a8a8a8;transform:rotate(45deg)"></div></div><div style="position:absolute;left:105px;top:395px;line-height:18px;font-size:12.75px;color:#222;font-weight:normal;white-space:nowrap;">Mask_v1.1.webp</div><div style="position:absolute;left:84px;top:418.5px;width:15px;height:15px;background:#3a3a3a;border:1px solid #ccc"><div style="position:absolute;left:3px;top:3px;width:7px;height:7px;background:#a8a8a8;transform:rotate(45deg)"></div></div><div style="position:absolute;left:105px;top:417px;line-height:18px;font-size:12.75px;color:#222;font-weight:normal;white-space:nowrap;">Mask_v1.2.webp</div><div style="position:absolute;left:0;top:431.5px;width:100%;height:28px;background:#fff;border-top:1px solid #e4e4e4"><svg style="position:absolute;left:12px;top:8px;" width="16" height="12" viewBox="0 0 16 12" fill="none"><path d="M4 11H12.5A2.8 2.8 0 0 0 12.9 5.4A4 4 0 0 0 5.2 4.6A3.1 3.1 0 0 0 4 11Z" fill="#3d9ae6"/></svg><div style="position:absolute;left:31px;top:5px;line-height:18px;font-size:11.6px;color:#8a8a8a;font-weight:normal;white-space:nowrap;">iCloud Drive</div><svg style="position:absolute;left:98px;top:9.5px;" width="6" height="9" viewBox="0 0 6 9" fill="none"><path d="M2 2.2L4.3 4.5L2 6.8" stroke="#8a8a8a" stroke-width="1.2" stroke-linecap="round" stroke-linejoin="round"/></svg><div style="position:absolute;left:111px;top:8.0px;width:12.5px;height:12px"><div style="position:absolute;left:0;top:0;width:5.625px;height:3px;background:#48a8e6;border-radius:1px 2px 0 0"></div><div style="position:absolute;left:0;top:1.5px;width:12.5px;height:10.5px;background:#64b9ef;border-radius:1.5px;border-top:1.5px solid #4aa6e2"></div></div><div style="position:absolute;left:127px;top:5px;line-height:18px;font-size:11.6px;color:#8a8a8a;font-weight:normal;white-space:nowrap;">Affinity</div><svg style="position:absolute;left:170px;top:9.5px;" width="6" height="9" viewBox="0 0 6 9" fill="none"><path d="M2 2.2L4.3 4.5L2 6.8" stroke="#8a8a8a" stroke-width="1.2" stroke-linecap="round" stroke-linejoin="round"/></svg><div style="position:absolute;left:182px;top:8.0px;width:12.5px;height:12px"><div style="position:absolute;left:0;top:0;width:5.625px;height:3px;background:#48a8e6;border-radius:1px 2px 0 0"></div><div style="position:absolute;left:0;top:1.5px;width:12.5px;height:10.5px;background:#64b9ef;border-radius:1.5px;border-top:1.5px solid #4aa6e2"></div></div><div style="position:absolute;left:199px;top:5px;line-height:18px;font-size:11.6px;color:#8a8a8a;font-weight:normal;white-space:nowrap;">Collage</div></div><div style="position:absolute;left:0;top:459.5px;width:100%;height:27px;background:#e3e3e3;border-top:1px solid #dcdcdc;text-align:center;line-height:27px;font-size:12.2px;color:#a2a2a2">3 items, 12.46 GB available on iCloud</div></div></div>
<div class="win" style="left:634px;top:116px;width:691px;height:489px;z-index:3"><div class="sb" style="background:#e4e4e4"><div class="lbl" style="top:62px;color:#a7a7a7">Favorites</div><svg style="position:absolute;left:18px;top:77.5px;" width="15" height="15" viewBox="0 0 15 15" fill="none"><g stroke="#a6c6ef" stroke-width="1.4" stroke-linecap="round"><path d="M3.2 11.8 A6.3 6.3 0 1 1 11.8 11.8"/><path d="M5 10.2 A4 4 0 1 1 10 10.2"/><path d="M6.5 8.7 A1.9 1.9 0 1 1 8.5 8.7"/></g><circle cx="7.5" cy="7.3" r="0.9" fill="#a6c6ef"/></svg><div class="it" style="top:85px;color:#9f9f9f">AirDrop</div><svg style="position:absolute;left:18px;top:105.5px;" width="15" height="15" viewBox="0 0 15 15" fill="none"><g stroke="#a6c6ef" stroke-width="1.4" stroke-linecap="round"><circle cx="7.5" cy="7.5" r="6.2"/><path d="M7.2 3.8V7.7H4.6"/></g></svg><div class="it" style="top:113px;color:#9f9f9f">Recents</div><svg style="position:absolute;left:18px;top:133.5px;" width="15" height="15" viewBox="0 0 15 15" fill="none"><g stroke="#a6c6ef" stroke-width="1.5" stroke-linecap="round"><path d="M7.5 1.5L2.5 12.5"/><path d="M6 1.5L12.5 13"/><path d="M1 10.5H14"/></g></svg><div class="it" style="top:141px;color:#9f9f9f">Applications</div><svg style="position:absolute;left:18px;top:161.5px;" width="15" height="15" viewBox="0 0 15 15" fill="none"><g stroke="#a6c6ef" stroke-width="1.4"><rect x="0.8" y="1.5" width="13.4" height="11" rx="1.5"/></g><rect x="3" y="9" width="9" height="1.6" fill="#a6c6ef"/></svg><div class="it" style="top:169px;color:#9f9f9f">Desktop</div><svg style="position:absolute;left:18px;top:189.5px;" width="15" height="15" viewBox="0 0 15 15" fill="none"><g stroke="#a6c6ef" stroke-width="1.3" stroke-linejoin="round"><path d="M3 1H8.5L12 4.5V13.5A0.8 0.8 0 0 1 11.2 14.3H3.8A0.8 0.8 0 0 1 3 13.5Z"/><path d="M8.5 1V4.5H12"/></g></svg><div class="it" style="top:197px;color:#9f9f9f">Documents</div><svg style="position:absolute;left:18px;top:217.5px;" width="15" height="15" viewBox="0 0 15 15" fill="none"><g stroke="#a6c6ef" stroke-width="1.4" stroke-linejoin="round"><path d="M1 7.5L7.5 1.5L14 7.5"/><path d="M2.8 6V13.5H12.2V6"/><path d="M11 2.5V4.5"/></g><rect x="6" y="9" width="3" height="4.5" fill="#a6c6ef"/></svg><div class="it" style="top:225px;color:#9f9f9f">yonatan.bk</div><svg style="position:absolute;left:18px;top:245.5px;" width="15" height="15" viewBox="0 0 15 15" fill="none"><g stroke="#a6c6ef" stroke-width="1.3"><rect x="0.8" y="2" width="13.4" height="11" rx="1.5"/></g><path d="M1.5 12.3L5 8L8 10.5L10.5 8.5L13.5 11.5V12.3Z" fill="#a6c6ef"/><circle cx="10" cy="5.3" r="1.1" fill="#a6c6ef"/></svg><div class="it" style="top:253px;color:#9f9f9f">Pictures</div><svg style="position:absolute;left:18px;top:273.5px;" width="15" height="15" viewBox="0 0 15 15" fill="none"><g stroke="#a6c6ef" stroke-width="1.3" stroke-linecap="round"><circle cx="7.5" cy="7.5" r="6.2"/><path d="M7.5 3.8V10.5"/><path d="M4.8 8L7.5 10.7L10.2 8"/></g></svg><div class="it" style="top:281px;color:#9f9f9f">Downloads</div><svg style="position:absolute;left:18px;top:301.5px;" width="15" height="15" viewBox="0 0 15 15" fill="none"><g stroke="#a6c6ef" stroke-width="1.3" stroke-linejoin="round"><path d="M1 3.2A1 1 0 0 1 2 2.2H5.6L7 3.6H13A1 1 0 0 1 14 4.6V12A1 1 0 0 1 13 13H2A1 1 0 0 1 1 12Z"/><path d="M1 5.6H14"/></g></svg><div class="it" style="top:309px;color:#9f9f9f">Pepperi</div><svg style="position:absolute;left:18px;top:329.5px;" width="15" height="15" viewBox="0 0 15 15" fill="none"><g stroke="#a6c6ef" stroke-width="1.3"><rect x="0.8" y="1.5" width="13.4" height="12" rx="1.2"/><path d="M3.8 1.5V13.5M11.2 1.5V13.5M3.8 7.5H11.2"/></g><rect x="0.8" y="1.5" width="3" height="12" fill="#a6c6ef" opacity="0.6"/><rect x="11.2" y="1.5" width="3" height="12" fill="#a6c6ef" opacity="0.6"/></svg><div class="it" style="top:337px;color:#9f9f9f">Movies</div><svg style="position:absolute;left:18px;top:357.5px;" width="15" height="15" viewBox="0 0 15 15" fill="none"><g stroke="#a6c6ef" stroke-width="1.3" stroke-linejoin="round"><path d="M1 3.2A1 1 0 0 1 2 2.2H5.6L7 3.6H13A1 1 0 0 1 14 4.6V12A1 1 0 0 1 13 13H2A1 1 0 0 1 1 12Z"/><path d="M1 5.6H14"/></g></svg><div class="it" style="top:365px;color:#9f9f9f">PhotoKof</div><svg style="position:absolute;left:18px;top:385.5px;" width="15" height="15" viewBox="0 0 15 15" fill="none"><g stroke="#a6c6ef" stroke-width="1.3" stroke-linejoin="round"><path d="M1 3.2A1 1 0 0 1 2 2.2H5.6L7 3.6H13A1 1 0 0 1 14 4.6V12A1 1 0 0 1 13 13H2A1 1 0 0 1 1 12Z"/><path d="M1 5.6H14"/></g></svg><div class="it" style="top:393px;color:#9f9f9f">Muzik</div><div class="lbl" style="top:430px;color:#a7a7a7">iCloud</div><div class="lbl" style="top:462px;color:#a7a7a7">Locations</div><svg style="position:absolute;left:18px;top:476.5px;" width="15" height="15" viewBox="0 0 15 15" fill="none"><g stroke="#bdbdbd" stroke-width="1.3" stroke-linejoin="round"><path d="M4 12.5H12.3A3 3 0 0 0 12.6 6.5A4.3 4.3 0 0 0 4.4 5.8A3.4 3.4 0 0 0 4 12.5Z"/></g></svg><div class="it" style="top:484px;color:#9f9f9f">OneDrive</div><svg style="position:absolute;left:18px;top:504.5px;" width="15" height="15" viewBox="0 0 15 15" fill="none"><g fill="#bbb"><path d="M4 1.5L0.8 3.6L4 5.7L7.3 3.6Z"/><path d="M11 1.5L7.7 3.6L11 5.7L14.2 3.6Z"/><path d="M4 5.9L0.8 8L4 10.1L7.3 8Z"/><path d="M11 5.9L7.7 8L11 10.1L14.2 8Z"/><path d="M7.5 8.5L4.3 10.6L7.5 12.7L10.7 10.6Z"/></g></svg><div class="it" style="top:512px;color:#9f9f9f">Dropbox</div></div><div class="light" style="left:20px;background:#c6c6c6"></div><div class="light" style="left:40px;background:#c6c6c6"></div><div class="light" style="left:60px;background:#c6c6c6"></div><div class="main" style="width:558px;height:489px"><div style="position:absolute;left:0;top:0;width:2px;height:100%;background:rgba(0,0,0,0.055);z-index:20"></div><div class="tb" style="background:#e1e1e1"><svg style="position:absolute;left:25px;top:17px;" width="9" height="16" viewBox="0 0 9 16" fill="none"><path d="M7.5 1L1.5 8L7.5 15" stroke="#bdbdbd" stroke-width="1.4" stroke-linecap="round" stroke-linejoin="round"/></svg><svg style="position:absolute;left:60px;top:17px;" width="9" height="16" viewBox="0 0 9 16" fill="none"><path d="M1.5 1L7.5 8L1.5 15" stroke="#bdbdbd" stroke-width="1.4" stroke-linecap="round" stroke-linejoin="round"/></svg><div class="ttl" style="color:#9d9d9d;margin-left:-4px">Desktop — Local</div><div style="position:absolute;left:557px;top:25px"><svg style="position:absolute;left:-298px;top:-7.5px;" width="20" height="15" viewBox="0 0 20 15" fill="none"><rect x="0.7" y="0.7" width="18.6" height="13.6" rx="2.2" stroke="#b3b3b3" stroke-width="1.4"/><path d="M7 0.7V14.3M13 0.7V14.3" stroke="#b3b3b3" stroke-width="1.4"/></svg><svg style="position:absolute;left:-271px;top:-7px;" width="10" height="14" viewBox="0 0 10 14" fill="none"><path d="M1.5 5L5 1.5L8.5 5M1.5 9L5 12.5L8.5 9" stroke="#b3b3b3" stroke-width="1.4" stroke-linecap="round" stroke-linejoin="round"/></svg><svg style="position:absolute;left:-212px;top:-9.5px;" width="19" height="17" viewBox="0 0 19 17" fill="none"><path d="M0.5 0.8H18.5" stroke="#b3b3b3" stroke-width="1.3"/><rect x="0.7" y="4.3" width="4.8" height="4.2" rx="1" stroke="#b3b3b3" stroke-width="1.2"/><rect x="7.2" y="4.3" width="4.8" height="4.2" rx="1" stroke="#b3b3b3" stroke-width="1.2"/><rect x="13.7" y="4.3" width="4.8" height="4.2" rx="1" stroke="#b3b3b3" stroke-width="1.2"/><rect x="0.7" y="11.3" width="4.8" height="4.2" rx="1" stroke="#b3b3b3" stroke-width="1.2"/><rect x="7.2" y="11.3" width="4.8" height="4.2" rx="1" stroke="#b3b3b3" stroke-width="1.2"/><rect x="13.7" y="11.3" width="4.8" height="4.2" rx="1" stroke="#b3b3b3" stroke-width="1.2"/></svg><svg style="position:absolute;left:-186px;top:-2.5px;" width="9" height="6" viewBox="0 0 9 6" fill="none"><path d="M1 1L4.5 4.5L8 1" stroke="#b3b3b3" stroke-width="1.4" stroke-linecap="round" stroke-linejoin="round"/></svg><svg style="position:absolute;left:-155px;top:-10.5px;" width="15" height="19" viewBox="0 0 15 19" fill="none"><path d="M7.5 1V11.5M4 4.5L7.5 1L11 4.5" stroke="#b3b3b3" stroke-width="1.4" stroke-linecap="round" stroke-linejoin="round"/><path d="M5 7.5H2.3A1 1 0 0 0 1.3 8.5V16.8A1 1 0 0 0 2.3 17.8H12.7A1 1 0 0 0 13.7 16.8V8.5A1 1 0 0 0 12.7 7.5H10" stroke="#b3b3b3" stroke-width="1.4"/></svg><svg style="position:absolute;left:-118px;top:-8.5px;" width="20" height="18" viewBox="0 0 20 18" fill="none"><path d="M10.2 1.2H17A1.6 1.6 0 0 1 18.6 2.8V9.3L10 17.3A1.3 1.3 0 0 1 8.2 17.3L1.6 10.7A1.3 1.3 0 0 1 1.6 8.9Z" stroke="#b3b3b3" stroke-width="1.4" stroke-linejoin="round"/><circle cx="14.6" cy="5.2" r="1.1" fill="#b3b3b3"/></svg><svg style="position:absolute;left:-65px;top:-5.5px;" width="14" height="12" viewBox="0 0 14 12" fill="none"><path d="M1.5 1L6 6L1.5 11M7.5 1L12 6L7.5 11" stroke="#b3b3b3" stroke-width="1.4" stroke-linecap="round" stroke-linejoin="round"/></svg><svg style="position:absolute;left:-35px;top:-7.5px;" width="17" height="16" viewBox="0 0 17 16" fill="none"><circle cx="6.8" cy="6.8" r="5.6" stroke="#b3b3b3" stroke-width="1.6"/><path d="M10.8 10.8L15.5 15" stroke="#b3b3b3" stroke-width="1.8" stroke-linecap="round"/></svg></div></div><div class="tab" style="background:#e1e1e1"><div class="tabt" style="width:558px;color:#a3a3a3">Desktop — Local</div><div class="plus" style="background:#d6d6d6"><svg style="position:absolute;left:8px;top:8px;" width="12" height="12" viewBox="0 0 12 12" fill="none"><path d="M6 0.5V11.5M0.5 6H11.5" stroke="#8a8a8a" stroke-width="1.2"/></svg></div></div><div style="position:absolute;left:0;top:80px;width:100%;height:354px;background:#fff"></div><div style="position:absolute;left:245px;top:80px;width:1px;height:354px;background:#e8e8e8"></div><div style="position:absolute;left:0;top:107px;width:245px;height:1px;background:#e6e6e6"></div><svg style="position:absolute;left:224px;top:119.5px;" width="6" height="9" viewBox="0 0 6 9" fill="none"><path d="M1.5 1.3L4.5 4.5L1.5 7.7" stroke="#a8a8a8" stroke-width="1.1" stroke-linecap="round" stroke-linejoin="round"/></svg><div style="position:absolute;left:0;top:434px;width:100%;height:28px;background:#fff;border-top:1px solid #e4e4e4"></div><div style="position:absolute;left:0;top:462px;width:100%;height:27px;background:#e3e3e3;border-top:1px solid #dcdcdc"></div></div></div>
<div class="win" style="left:263px;top:62px;width:691px;height:487px;z-index:4"><div class="sb" style="background:#e4e4e4"><div class="lbl" style="top:62px;color:#a7a7a7">Favorites</div><svg style="position:absolute;left:18px;top:77.5px;" width="15" height="15" viewBox="0 0 15 15" fill="none"><g stroke="#a6c6ef" stroke-width="1.4" stroke-linecap="round"><path d="M3.2 11.8 A6.3 6.3 0 1 1 11.8 11.8"/><path d="M5 10.2 A4 4 0 1 1 10 10.2"/><path d="M6.5 8.7 A1.9 1.9 0 1 1 8.5 8.7"/></g><circle cx="7.5" cy="7.3" r="0.9" fill="#a6c6ef"/></svg><div class="it" style="top:85px;color:#9f9f9f">AirDrop</div><div class="sel" style="top:99px;background:#d0d0d0"></div><svg style="position:absolute;left:18px;top:105.5px;" width="15" height="15" viewBox="0 0 15 15" fill="none"><g stroke="#a6c6ef" stroke-width="1.4" stroke-linecap="round"><circle cx="7.5" cy="7.5" r="6.2"/><path d="M7.2 3.8V7.7H4.6"/></g></svg><div class="it" style="top:113px;color:#9f9f9f">Recents</div><svg style="position:absolute;left:18px;top:133.5px;" width="15" height="15" viewBox="0 0 15 15" fill="none"><g stroke="#a6c6ef" stroke-width="1.5" stroke-linecap="round"><path d="M7.5 1.5L2.5 12.5"/><path d="M6 1.5L12.5 13"/><path d="M1 10.5H14"/></g></svg><div class="it" style="top:141px;color:#9f9f9f">Applications</div><svg style="position:absolute;left:18px;top:161.5px;" width="15" height="15" viewBox="0 0 15 15" fill="none"><g stroke="#a6c6ef" stroke-width="1.4"><rect x="0.8" y="1.5" width="13.4" height="11" rx="1.5"/></g><rect x="3" y="9" width="9" height="1.6" fill="#a6c6ef"/></svg><div class="it" style="top:169px;color:#9f9f9f">Desktop</div><svg style="position:absolute;left:18px;top:189.5px;" width="15" height="15" viewBox="0 0 15 15" fill="none"><g stroke="#a6c6ef" stroke-width="1.3" stroke-linejoin="round"><path d="M3 1H8.5L12 4.5V13.5A0.8 0.8 0 0 1 11.2 14.3H3.8A0.8 0.8 0 0 1 3 13.5Z"/><path d="M8.5 1V4.5H12"/></g></svg><div class="it" style="top:197px;color:#9f9f9f">Documents</div><svg style="position:absolute;left:18px;top:217.5px;" width="15" height="15" viewBox="0 0 15 15" fill="none"><g stroke="#a6c6ef" stroke-width="1.4" stroke-linejoin="round"><path d="M1 7.5L7.5 1.5L14 7.5"/><path d="M2.8 6V13.5H12.2V6"/><path d="M11 2.5V4.5"/></g><rect x="6" y="9" width="3" height="4.5" fill="#a6c6ef"/></svg><div class="it" style="top:225px;color:#9f9f9f">yonatan.bk</div><svg style="position:absolute;left:18px;top:245.5px;" width="15" height="15" viewBox="0 0 15 15" fill="none"><g stroke="#a6c6ef" stroke-width="1.3"><rect x="0.8" y="2" width="13.4" height="11" rx="1.5"/></g><path d="M1.5 12.3L5 8L8 10.5L10.5 8.5L13.5 11.5V12.3Z" fill="#a6c6ef"/><circle cx="10" cy="5.3" r="1.1" fill="#a6c6ef"/></svg><div class="it" style="top:253px;color:#9f9f9f">Pictures</div><svg style="position:absolute;left:18px;top:273.5px;" width="15" height="15" viewBox="0 0 15 15" fill="none"><g stroke="#a6c6ef" stroke-width="1.3" stroke-linecap="round"><circle cx="7.5" cy="7.5" r="6.2"/><path d="M7.5 3.8V10.5"/><path d="M4.8 8L7.5 10.7L10.2 8"/></g></svg><div class="it" style="top:281px;color:#9f9f9f">Downloads</div><svg style="position:absolute;left:18px;top:301.5px;" width="15" height="15" viewBox="0 0 15 15" fill="none"><g stroke="#a6c6ef" stroke-width="1.3" stroke-linejoin="round"><path d="M1 3.2A1 1 0 0 1 2 2.2H5.6L7 3.6H13A1 1 0 0 1 14 4.6V12A1 1 0 0 1 13 13H2A1 1 0 0 1 1 12Z"/><path d="M1 5.6H14"/></g></svg><div class="it" style="top:309px;color:#9f9f9f">Pepperi</div><svg style="position:absolute;left:18px;top:329.5px;" width="15" height="15" viewBox="0 0 15 15" fill="none"><g stroke="#a6c6ef" stroke-width="1.3"><rect x="0.8" y="1.5" width="13.4" height="12" rx="1.2"/><path d="M3.8 1.5V13.5M11.2 1.5V13.5M3.8 7.5H11.2"/></g><rect x="0.8" y="1.5" width="3" height="12" fill="#a6c6ef" opacity="0.6"/><rect x="11.2" y="1.5" width="3" height="12" fill="#a6c6ef" opacity="0.6"/></svg><div class="it" style="top:337px;color:#9f9f9f">Movies</div><svg style="position:absolute;left:18px;top:357.5px;" width="15" height="15" viewBox="0 0 15 15" fill="none"><g stroke="#a6c6ef" stroke-width="1.3" stroke-linejoin="round"><path d="M1 3.2A1 1 0 0 1 2 2.2H5.6L7 3.6H13A1 1 0 0 1 14 4.6V12A1 1 0 0 1 13 13H2A1 1 0 0 1 1 12Z"/><path d="M1 5.6H14"/></g></svg><div class="it" style="top:365px;color:#9f9f9f">PhotoKof</div><svg style="position:absolute;left:18px;top:385.5px;" width="15" height="15" viewBox="0 0 15 15" fill="none"><g stroke="#a6c6ef" stroke-width="1.3" stroke-linejoin="round"><path d="M1 3.2A1 1 0 0 1 2 2.2H5.6L7 3.6H13A1 1 0 0 1 14 4.6V12A1 1 0 0 1 13 13H2A1 1 0 0 1 1 12Z"/><path d="M1 5.6H14"/></g></svg><div class="it" style="top:393px;color:#9f9f9f">Muzik</div><div class="lbl" style="top:430px;color:#a7a7a7">iCloud</div><div class="lbl" style="top:462px;color:#a7a7a7">Locations</div><svg style="position:absolute;left:18px;top:476.5px;" width="15" height="15" viewBox="0 0 15 15" fill="none"><g stroke="#bdbdbd" stroke-width="1.3" stroke-linejoin="round"><path d="M4 12.5H12.3A3 3 0 0 0 12.6 6.5A4.3 4.3 0 0 0 4.4 5.8A3.4 3.4 0 0 0 4 12.5Z"/></g></svg><div class="it" style="top:484px;color:#9f9f9f">OneDrive</div><svg style="position:absolute;left:18px;top:504.5px;" width="15" height="15" viewBox="0 0 15 15" fill="none"><g fill="#bbb"><path d="M4 1.5L0.8 3.6L4 5.7L7.3 3.6Z"/><path d="M11 1.5L7.7 3.6L11 5.7L14.2 3.6Z"/><path d="M4 5.9L0.8 8L4 10.1L7.3 8Z"/><path d="M11 5.9L7.7 8L11 10.1L14.2 8Z"/><path d="M7.5 8.5L4.3 10.6L7.5 12.7L10.7 10.6Z"/></g></svg><div class="it" style="top:512px;color:#9f9f9f">Dropbox</div></div><div class="light" style="left:20px;background:#c6c6c6"></div><div class="light" style="left:40px;background:#c6c6c6"></div><div class="light" style="left:60px;background:#c6c6c6"></div><div class="main" style="width:558px;height:487px"><div style="position:absolute;left:0;top:0;width:2px;height:100%;background:rgba(0,0,0,0.055);z-index:20"></div><div class="tb" style="background:#e1e1e1"><svg style="position:absolute;left:25px;top:17px;" width="9" height="16" viewBox="0 0 9 16" fill="none"><path d="M7.5 1L1.5 8L7.5 15" stroke="#bdbdbd" stroke-width="1.4" stroke-linecap="round" stroke-linejoin="round"/></svg><svg style="position:absolute;left:60px;top:17px;" width="9" height="16" viewBox="0 0 9 16" fill="none"><path d="M1.5 1L7.5 8L1.5 15" stroke="#bdbdbd" stroke-width="1.4" stroke-linecap="round" stroke-linejoin="round"/></svg><div class="ttl" style="color:#9d9d9d;margin-left:0px">Recents</div><div style="position:absolute;left:557px;top:25px"><svg style="position:absolute;left:-298px;top:-7.5px;" width="20" height="15" viewBox="0 0 20 15" fill="none"><rect x="0.7" y="0.7" width="18.6" height="13.6" rx="2.2" stroke="#b3b3b3" stroke-width="1.4"/><path d="M7 0.7V14.3M13 0.7V14.3" stroke="#b3b3b3" stroke-width="1.4"/></svg><svg style="position:absolute;left:-271px;top:-7px;" width="10" height="14" viewBox="0 0 10 14" fill="none"><path d="M1.5 5L5 1.5L8.5 5M1.5 9L5 12.5L8.5 9" stroke="#b3b3b3" stroke-width="1.4" stroke-linecap="round" stroke-linejoin="round"/></svg><svg style="position:absolute;left:-212px;top:-9.5px;" width="19" height="17" viewBox="0 0 19 17" fill="none"><path d="M0.5 0.8H18.5" stroke="#b3b3b3" stroke-width="1.3"/><rect x="0.7" y="4.3" width="4.8" height="4.2" rx="1" stroke="#b3b3b3" stroke-width="1.2"/><rect x="7.2" y="4.3" width="4.8" height="4.2" rx="1" stroke="#b3b3b3" stroke-width="1.2"/><rect x="13.7" y="4.3" width="4.8" height="4.2" rx="1" stroke="#b3b3b3" stroke-width="1.2"/><rect x="0.7" y="11.3" width="4.8" height="4.2" rx="1" stroke="#b3b3b3" stroke-width="1.2"/><rect x="7.2" y="11.3" width="4.8" height="4.2" rx="1" stroke="#b3b3b3" stroke-width="1.2"/><rect x="13.7" y="11.3" width="4.8" height="4.2" rx="1" stroke="#b3b3b3" stroke-width="1.2"/></svg><svg style="position:absolute;left:-186px;top:-2.5px;" width="9" height="6" viewBox="0 0 9 6" fill="none"><path d="M1 1L4.5 4.5L8 1" stroke="#b3b3b3" stroke-width="1.4" stroke-linecap="round" stroke-linejoin="round"/></svg><svg style="position:absolute;left:-155px;top:-10.5px;" width="15" height="19" viewBox="0 0 15 19" fill="none"><path d="M7.5 1V11.5M4 4.5L7.5 1L11 4.5" stroke="#b3b3b3" stroke-width="1.4" stroke-linecap="round" stroke-linejoin="round"/><path d="M5 7.5H2.3A1 1 0 0 0 1.3 8.5V16.8A1 1 0 0 0 2.3 17.8H12.7A1 1 0 0 0 13.7 16.8V8.5A1 1 0 0 0 12.7 7.5H10" stroke="#b3b3b3" stroke-width="1.4"/></svg><svg style="position:absolute;left:-118px;top:-8.5px;" width="20" height="18" viewBox="0 0 20 18" fill="none"><path d="M10.2 1.2H17A1.6 1.6 0 0 1 18.6 2.8V9.3L10 17.3A1.3 1.3 0 0 1 8.2 17.3L1.6 10.7A1.3 1.3 0 0 1 1.6 8.9Z" stroke="#b3b3b3" stroke-width="1.4" stroke-linejoin="round"/><circle cx="14.6" cy="5.2" r="1.1" fill="#b3b3b3"/></svg><svg style="position:absolute;left:-65px;top:-5.5px;" width="14" height="12" viewBox="0 0 14 12" fill="none"><path d="M1.5 1L6 6L1.5 11M7.5 1L12 6L7.5 11" stroke="#b3b3b3" stroke-width="1.4" stroke-linecap="round" stroke-linejoin="round"/></svg><svg style="position:absolute;left:-35px;top:-7.5px;" width="17" height="16" viewBox="0 0 17 16" fill="none"><circle cx="6.8" cy="6.8" r="5.6" stroke="#b3b3b3" stroke-width="1.6"/><path d="M10.8 10.8L15.5 15" stroke="#b3b3b3" stroke-width="1.8" stroke-linecap="round"/></svg></div></div><div class="tab" style="background:#e1e1e1"><div class="tabt" style="width:558px;color:#a3a3a3">Recents</div><div class="plus" style="background:#d6d6d6"><svg style="position:absolute;left:8px;top:8px;" width="12" height="12" viewBox="0 0 12 12" fill="none"><path d="M6 0.5V11.5M0.5 6H11.5" stroke="#8a8a8a" stroke-width="1.2"/></svg></div></div><div style="position:absolute;left:0;top:80px;width:100%;height:352px;background:#fff"></div><div style="position:absolute;left:245px;top:80px;width:1px;height:352px;background:#e8e8e8"></div><div style="position:absolute;left:38px;top:85.5px;line-height:18px;font-size:11px;color:#8e8e8e;font-weight:bold;white-space:nowrap;">Today</div><div style="position:absolute;left:0;top:107px;width:245px;height:1px;background:#e3e3e3"></div><div style="position:absolute;left:38px;top:189px;line-height:18px;font-size:11px;color:#8e8e8e;font-weight:bold;white-space:nowrap;">Yesterday</div><div style="position:absolute;left:17px;top:118.2px;width:15px;height:13px;background:#1c1c1c;border-radius:1px"><div style="position:absolute;left:3px;top:3px;width:9px;height:7px;background:#bdbdbd"></div></div><div style="position:absolute;left:38px;top:115.7px;line-height:18px;font-size:12.75px;color:#222;font-weight:normal;white-space:nowrap;">Screen Recordi<span style="letter-spacing:-0.55px">...</span>t 18.41.07.mov</div><div style="position:absolute;left:17px;top:141.7px;width:15px;height:10px;background:#e6e6e6;border:1px solid #bbb"><div style="position:absolute;left:1px;top:1px;width:11px;height:6px;background:#222"></div><div style="position:absolute;left:5px;top:2px;width:4px;height:3px;background:#999"></div></div><div style="position:absolute;left:38px;top:137.7px;line-height:18px;font-size:12.75px;color:#222;font-weight:normal;white-space:nowrap;">Screenshot 20<span style="letter-spacing:-0.55px">...</span>at 18.42.13.png</div><div style="position:absolute;left:17px;top:215.7px;width:15px;height:12px;background:#111;border-radius:1px"><div style="position:absolute;left:2px;top:2px;width:4px;height:7px;background:#e0e0e0"></div></div><div style="position:absolute;left:38px;top:212.7px;line-height:18px;font-size:12.75px;color:#222;font-weight:normal;white-space:nowrap;">AppleScript Issue 1.mp4</div><div style="position:absolute;left:17px;top:237.7px;width:15px;height:12px;background:#0d0d0d;border-radius:1px"><div style="position:absolute;left:3px;top:6px;width:9px;height:1px;background:#556"></div></div><div style="position:absolute;left:38px;top:234.7px;line-height:18px;font-size:12.75px;color:#222;font-weight:normal;white-space:nowrap;">AppleScript-1.mp4</div><div style="position:absolute;left:17px;top:259.7px;width:15px;height:12px;background:#0d0d0d;border-radius:1px"><div style="position:absolute;left:3px;top:6px;width:9px;height:1px;background:#556"></div></div><div style="position:absolute;left:38px;top:256.7px;line-height:18px;font-size:12.75px;color:#222;font-weight:normal;white-space:nowrap;">AppleScript-2.mp4</div><div style="position:absolute;left:18px;top:280.7px;width:13px;height:15px;background:#fafafa;border:1px solid #d2d2d2;border-radius:1px"></div><div style="position:absolute;left:38px;top:278.7px;line-height:18px;font-size:12.75px;color:#222;font-weight:normal;white-space:nowrap;">datapopulator-demo.sketch</div><div style="position:absolute;left:18px;top:302.7px;width:13px;height:15px;background:#f7f7f7;border:1px solid #cfcfcf;border-radius:1px"><div style="position:absolute;left:3px;top:9px;width:6px;height:2px;background:#aaa"></div></div><div style="position:absolute;left:38px;top:300.7px;line-height:18px;font-size:12.75px;color:#222;font-weight:normal;white-space:nowrap;">KeyboardShortcutTry-1.scpt</div><div style="position:absolute;left:18px;top:324.7px;width:13px;height:15px;background:#f7f7f7;border:1px solid #cfcfcf;border-radius:1px"><div style="position:absolute;left:3px;top:9px;width:6px;height:2px;background:#aaa"></div></div><div style="position:absolute;left:38px;top:322.7px;line-height:18px;font-size:12.75px;color:#222;font-weight:normal;white-space:nowrap;">KeyboardShortcutTry-2.scpt</div><div style="position:absolute;left:18px;top:346.7px;width:13px;height:15px;background:#f7f7f7;border:1px solid #cfcfcf;border-radius:1px"><div style="position:absolute;left:3px;top:9px;width:6px;height:2px;background:#aaa"></div></div><div style="position:absolute;left:38px;top:344.7px;line-height:18px;font-size:12.75px;color:#222;font-weight:normal;white-space:nowrap;">Reveal Shortcuts Anchor.scpt</div><div style="position:absolute;left:20px;top:368.2px;width:9px;height:15px;background:#fbfbfb;border:1px solid #d0d0d0;border-radius:1px"></div><div style="position:absolute;left:38px;top:366.7px;line-height:18px;font-size:12.75px;color:#222;font-weight:normal;white-space:nowrap;">roll up 841mm<span style="letter-spacing:-0.55px">...</span>+ bleeds-2.jpg</div><div style="position:absolute;left:20px;top:390.2px;width:10px;height:15px;background:#fbfbfb;border:1px solid #d0d0d0;border-radius:1px"><div style="position:absolute;left:2px;top:5px;width:5px;height:4px;background:#5b6ea8"></div></div><div style="position:absolute;left:38px;top:388.7px;line-height:18px;font-size:12.75px;color:#222;font-weight:normal;white-space:nowrap;">roll up 841mm<span style="letter-spacing:-0.55px">...</span>+ bleeds-2.pdf</div><div style="position:absolute;left:20px;top:412.2px;width:9px;height:15px;background:#fbfbfb;border:1px solid #d0d0d0;border-radius:1px"></div><div style="position:absolute;left:38px;top:410.7px;line-height:18px;font-size:12.75px;color:#222;font-weight:normal;white-space:nowrap;">roll up 841mm<span style="letter-spacing:-0.55px">...</span>m + bleeds.png</div><div style="position:absolute;left:0;top:432px;width:100%;height:28px;background:#fff;border-top:1px solid #e4e4e4"></div><div style="position:absolute;left:0;top:460px;width:100%;height:27px;background:#e3e3e3;border-top:1px solid #dcdcdc;text-align:center;line-height:27px;font-size:12px;color:#a2a2a2;padding-right:9px">3,236 items</div></div></div>
<div class="win" style="left:733px;top:341px;width:691px;height:520.5px;z-index:5"><div class="sb" style="background:#d9d9d9"><div class="lbl" style="top:62px;color:#8f8f8f">Favorites</div><svg style="position:absolute;left:18px;top:77.5px;" width="15" height="15" viewBox="0 0 15 15" fill="none"><g stroke="#2d7cf2" stroke-width="1.4" stroke-linecap="round"><path d="M3.2 11.8 A6.3 6.3 0 1 1 11.8 11.8"/><path d="M5 10.2 A4 4 0 1 1 10 10.2"/><path d="M6.5 8.7 A1.9 1.9 0 1 1 8.5 8.7"/></g><circle cx="7.5" cy="7.3" r="0.9" fill="#2d7cf2"/></svg><div class="it" style="top:85px;color:#262626">AirDrop</div><svg style="position:absolute;left:18px;top:105.5px;" width="15" height="15" viewBox="0 0 15 15" fill="none"><g stroke="#2d7cf2" stroke-width="1.4" stroke-linecap="round"><circle cx="7.5" cy="7.5" r="6.2"/><path d="M7.2 3.8V7.7H4.6"/></g></svg><div class="it" style="top:113px;color:#262626">Recents</div><svg style="position:absolute;left:18px;top:133.5px;" width="15" height="15" viewBox="0 0 15 15" fill="none"><g stroke="#2d7cf2" stroke-width="1.5" stroke-linecap="round"><path d="M7.5 1.5L2.5 12.5"/><path d="M6 1.5L12.5 13"/><path d="M1 10.5H14"/></g></svg><div class="it" style="top:141px;color:#262626">Applications</div><svg style="position:absolute;left:18px;top:161.5px;" width="15" height="15" viewBox="0 0 15 15" fill="none"><g stroke="#2d7cf2" stroke-width="1.4"><rect x="0.8" y="1.5" width="13.4" height="11" rx="1.5"/></g><rect x="3" y="9" width="9" height="1.6" fill="#2d7cf2"/></svg><div class="it" style="top:169px;color:#262626">Desktop</div><svg style="position:absolute;left:18px;top:189.5px;" width="15" height="15" viewBox="0 0 15 15" fill="none"><g stroke="#2d7cf2" stroke-width="1.3" stroke-linejoin="round"><path d="M3 1H8.5L12 4.5V13.5A0.8 0.8 0 0 1 11.2 14.3H3.8A0.8 0.8 0 0 1 3 13.5Z"/><path d="M8.5 1V4.5H12"/></g></svg><div class="it" style="top:197px;color:#262626">Documents</div><div class="sel" style="top:211px;background:#c8c8c8"></div><svg style="position:absolute;left:18px;top:217.5px;" width="15" height="15" viewBox="0 0 15 15" fill="none"><g stroke="#2d7cf2" stroke-width="1.4" stroke-linejoin="round"><path d="M1 7.5L7.5 1.5L14 7.5"/><path d="M2.8 6V13.5H12.2V6"/><path d="M11 2.5V4.5"/></g><rect x="6" y="9" width="3" height="4.5" fill="#2d7cf2"/></svg><div class="it" style="top:225px;color:#262626">yonatan.bk</div><svg style="position:absolute;left:18px;top:245.5px;" width="15" height="15" viewBox="0 0 15 15" fill="none"><g stroke="#2d7cf2" stroke-width="1.3"><rect x="0.8" y="2" width="13.4" height="11" rx="1.5"/></g><path d="M1.5 12.3L5 8L8 10.5L10.5 8.5L13.5 11.5V12.3Z" fill="#2d7cf2"/><circle cx="10" cy="5.3" r="1.1" fill="#2d7cf2"/></svg><div class="it" style="top:253px;color:#262626">Pictures</div><svg style="position:absolute;left:18px;top:273.5px;" width="15" height="15" viewBox="0 0 15 15" fill="none"><g stroke="#2d7cf2" stroke-width="1.3" stroke-linecap="round"><circle cx="7.5" cy="7.5" r="6.2"/><path d="M7.5 3.8V10.5"/><path d="M4.8 8L7.5 10.7L10.2 8"/></g></svg><div class="it" style="top:281px;color:#262626">Downloads</div><svg style="position:absolute;left:18px;top:301.5px;" width="15" height="15" viewBox="0 0 15 15" fill="none"><g stroke="#2d7cf2" stroke-width="1.3" stroke-linejoin="round"><path d="M1 3.2A1 1 0 0 1 2 2.2H5.6L7 3.6H13A1 1 0 0 1 14 4.6V12A1 1 0 0 1 13 13H2A1 1 0 0 1 1 12Z"/><path d="M1 5.6H14"/></g></svg><div class="it" style="top:309px;color:#262626">Pepperi</div><svg style="position:absolute;left:18px;top:329.5px;" width="15" height="15" viewBox="0 0 15 15" fill="none"><g stroke="#2d7cf2" stroke-width="1.3"><rect x="0.8" y="1.5" width="13.4" height="12" rx="1.2"/><path d="M3.8 1.5V13.5M11.2 1.5V13.5M3.8 7.5H11.2"/></g><rect x="0.8" y="1.5" width="3" height="12" fill="#2d7cf2" opacity="0.6"/><rect x="11.2" y="1.5" width="3" height="12" fill="#2d7cf2" opacity="0.6"/></svg><div class="it" style="top:337px;color:#262626">Movies</div><svg style="position:absolute;left:18px;top:357.5px;" width="15" height="15" viewBox="0 0 15 15" fill="none"><g stroke="#2d7cf2" stroke-width="1.3" stroke-linejoin="round"><path d="M1 3.2A1 1 0 0 1 2 2.2H5.6L7 3.6H13A1 1 0 0 1 14 4.6V12A1 1 0 0 1 13 13H2A1 1 0 0 1 1 12Z"/><path d="M1 5.6H14"/></g></svg><div class="it" style="top:365px;color:#262626">PhotoKof</div><svg style="position:absolute;left:18px;top:385.5px;" width="15" height="15" viewBox="0 0 15 15" fill="none"><g stroke="#2d7cf2" stroke-width="1.3" stroke-linejoin="round"><path d="M1 3.2A1 1 0 0 1 2 2.2H5.6L7 3.6H13A1 1 0 0 1 14 4.6V12A1 1 0 0 1 13 13H2A1 1 0 0 1 1 12Z"/><path d="M1 5.6H14"/></g></svg><div class="it" style="top:393px;color:#262626">Muzik</div><div class="lbl" style="top:430px;color:#8f8f8f">iCloud</div><div class="lbl" style="top:462px;color:#8f8f8f">Locations</div><svg style="position:absolute;left:18px;top:476.5px;" width="15" height="15" viewBox="0 0 15 15" fill="none"><g stroke="#8e8e8e" stroke-width="1.3" stroke-linejoin="round"><path d="M4 12.5H12.3A3 3 0 0 0 12.6 6.5A4.3 4.3 0 0 0 4.4 5.8A3.4 3.4 0 0 0 4 12.5Z"/></g></svg><div class="it" style="top:484px;color:#262626">OneDrive…</div><svg style="position:absolute;left:18px;top:504.5px;" width="15" height="15" viewBox="0 0 15 15" fill="none"><g fill="#555"><path d="M4 1.5L0.8 3.6L4 5.7L7.3 3.6Z"/><path d="M11 1.5L7.7 3.6L11 5.7L14.2 3.6Z"/><path d="M4 5.9L0.8 8L4 10.1L7.3 8Z"/><path d="M11 5.9L7.7 8L11 10.1L14.2 8Z"/><path d="M7.5 8.5L4.3 10.6L7.5 12.7L10.7 10.6Z"/></g></svg><div class="it" style="top:512px;color:#262626">Dropbox</div></div><div class="light" style="left:20px;background:#ec4c47"></div><div class="light" style="left:40px;background:#f4b331"></div><div class="light" style="left:60px;background:#4fc13c"></div><div class="main" style="width:558px;height:520.5px"><div style="position:absolute;left:0;top:0;width:2px;height:100%;background:rgba(0,0,0,0.055);z-index:20"></div><div class="tb" style="background:#ededed"><svg style="position:absolute;left:25px;top:17px;" width="9" height="16" viewBox="0 0 9 16" fill="none"><path d="M7.5 1L1.5 8L7.5 15" stroke="#8a8a8a" stroke-width="1.4" stroke-linecap="round" stroke-linejoin="round"/></svg><svg style="position:absolute;left:60px;top:17px;" width="9" height="16" viewBox="0 0 9 16" fill="none"><path d="M1.5 1L7.5 8L1.5 15" stroke="#8a8a8a" stroke-width="1.4" stroke-linecap="round" stroke-linejoin="round"/></svg><div class="ttl" style="color:#2a2a2a;margin-left:0px">shortcuts-for-macos</div><div style="position:absolute;left:557px;top:25px"><svg style="position:absolute;left:-298px;top:-7.5px;" width="20" height="15" viewBox="0 0 20 15" fill="none"><rect x="0.7" y="0.7" width="18.6" height="13.6" rx="2.2" stroke="#6d6d6d" stroke-width="1.4"/><path d="M7 0.7V14.3M13 0.7V14.3" stroke="#6d6d6d" stroke-width="1.4"/></svg><svg style="position:absolute;left:-271px;top:-7px;" width="10" height="14" viewBox="0 0 10 14" fill="none"><path d="M1.5 5L5 1.5L8.5 5M1.5 9L5 12.5L8.5 9" stroke="#6d6d6d" stroke-width="1.4" stroke-linecap="round" stroke-linejoin="round"/></svg><svg style="position:absolute;left:-212px;top:-9.5px;" width="19" height="17" viewBox="0 0 19 17" fill="none"><path d="M0.5 0.8H18.5" stroke="#6d6d6d" stroke-width="1.3"/><rect x="0.7" y="4.3" width="4.8" height="4.2" rx="1" stroke="#6d6d6d" stroke-width="1.2"/><rect x="7.2" y="4.3" width="4.8" height="4.2" rx="1" stroke="#6d6d6d" stroke-width="1.2"/><rect x="13.7" y="4.3" width="4.8" height="4.2" rx="1" stroke="#6d6d6d" stroke-width="1.2"/><rect x="0.7" y="11.3" width="4.8" height="4.2" rx="1" stroke="#6d6d6d" stroke-width="1.2"/><rect x="7.2" y="11.3" width="4.8" height="4.2" rx="1" stroke="#6d6d6d" stroke-width="1.2"/><rect x="13.7" y="11.3" width="4.8" height="4.2" rx="1" stroke="#6d6d6d" stroke-width="1.2"/></svg><svg style="position:absolute;left:-186px;top:-2.5px;" width="9" height="6" viewBox="0 0 9 6" fill="none"><path d="M1 1L4.5 4.5L8 1" stroke="#6d6d6d" stroke-width="1.4" stroke-linecap="round" stroke-linejoin="round"/></svg><svg style="position:absolute;left:-155px;top:-10.5px;" width="15" height="19" viewBox="0 0 15 19" fill="none"><path d="M7.5 1V11.5M4 4.5L7.5 1L11 4.5" stroke="#6d6d6d" stroke-width="1.4" stroke-linecap="round" stroke-linejoin="round"/><path d="M5 7.5H2.3A1 1 0 0 0 1.3 8.5V16.8A1 1 0 0 0 2.3 17.8H12.7A1 1 0 0 0 13.7 16.8V8.5A1 1 0 0 0 12.7 7.5H10" stroke="#6d6d6d" stroke-width="1.4"/></svg><svg style="position:absolute;left:-118px;top:-8.5px;" width="20" height="18" viewBox="0 0 20 18" fill="none"><path d="M10.2 1.2H17A1.6 1.6 0 0 1 18.6 2.8V9.3L10 17.3A1.3 1.3 0 0 1 8.2 17.3L1.6 10.7A1.3 1.3 0 0 1 1.6 8.9Z" stroke="#6d6d6d" stroke-width="1.4" stroke-linejoin="round"/><circle cx="14.6" cy="5.2" r="1.1" fill="#6d6d6d"/></svg><svg style="position:absolute;left:-65px;top:-5.5px;" width="14" height="12" viewBox="0 0 14 12" fill="none"><path d="M1.5 1L6 6L1.5 11M7.5 1L12 6L7.5 11" stroke="#6d6d6d" stroke-width="1.4" stroke-linecap="round" stroke-linejoin="round"/></svg><svg style="position:absolute;left:-35px;top:-7.5px;" width="17" height="16" viewBox="0 0 17 16" fill="none"><circle cx="6.8" cy="6.8" r="5.6" stroke="#6d6d6d" stroke-width="1.6"/><path d="M10.8 10.8L15.5 15" stroke="#6d6d6d" stroke-width="1.8" stroke-linecap="round"/></svg></div></div><div class="tab" style="background:#ececec"><div class="tabt" style="width:558px;color:#4a4a4a">shortcuts-for-macos</div><div class="plus" style="background:#dedede"><svg style="position:absolute;left:8px;top:8px;" width="12" height="12" viewBox="0 0 12 12" fill="none"><path d="M6 0.5V11.5M0.5 6H11.5" stroke="#8a8a8a" stroke-width="1.2"/></svg></div></div><div style="position:absolute;left:0;top:80px;width:100%;height:385.5px;background:#fff"></div><div style="position:absolute;left:72px;top:80px;width:1px;height:385.5px;background:#e6e6e6"></div><div style="position:absolute;left:317px;top:80px;width:1px;height:385.5px;background:#e6e6e6"></div><div style="position:absolute;left:0;top:152px;width:61px;height:21px;border-radius:0 5px 5px 0;background:#dcdcdc"></div><svg style="position:absolute;left:51px;top:91.5px;" width="6" height="9" viewBox="0 0 6 9" fill="none"><path d="M1.5 1.3L4.5 4.5L1.5 7.7" stroke="#8c8c8c" stroke-width="1.1" stroke-linecap="round" stroke-linejoin="round"/></svg><svg style="position:absolute;left:51px;top:113.5px;" width="6" height="9" viewBox="0 0 6 9" fill="none"><path d="M1.5 1.3L4.5 4.5L1.5 7.7" stroke="#8c8c8c" stroke-width="1.1" stroke-linecap="round" stroke-linejoin="round"/></svg><svg style="position:absolute;left:51px;top:135.5px;" width="6" height="9" viewBox="0 0 6 9" fill="none"><path d="M1.5 1.3L4.5 4.5L1.5 7.7" stroke="#8c8c8c" stroke-width="1.1" stroke-linecap="round" stroke-linejoin="round"/></svg><svg style="position:absolute;left:51px;top:157.5px;" width="6" height="9" viewBox="0 0 6 9" fill="none"><path d="M1.5 1.3L4.5 4.5L1.5 7.7" stroke="#8c8c8c" stroke-width="1.1" stroke-linecap="round" stroke-linejoin="round"/></svg><svg style="position:absolute;left:51px;top:179.5px;" width="6" height="9" viewBox="0 0 6 9" fill="none"><path d="M1.5 1.3L4.5 4.5L1.5 7.7" stroke="#8c8c8c" stroke-width="1.1" stroke-linecap="round" stroke-linejoin="round"/></svg><svg style="position:absolute;left:51px;top:201.5px;" width="6" height="9" viewBox="0 0 6 9" fill="none"><path d="M1.5 1.3L4.5 4.5L1.5 7.7" stroke="#8c8c8c" stroke-width="1.1" stroke-linecap="round" stroke-linejoin="round"/></svg><div style="position:absolute;left:0px;top:175px;line-height:18px;font-size:12.5px;color:#222;font-weight:normal;white-space:nowrap;">&nbsp;p</div><div style="position:absolute;left:89px;top:84.7px;width:15.5px;height:9.5px;background:#ecebe1;border:1px solid #cfcfcf;box-shadow:0 1px 1px rgba(0,0,0,0.15)"><div style="position:absolute;left:4px;top:2px;width:6px;height:4px;background:#c9c070"></div></div><div style="position:absolute;left:110px;top:80.7px;line-height:18px;font-size:12.75px;color:#222;font-weight:normal;white-space:nowrap;">cover-shortcut<span style="letter-spacing:-0.55px">...</span>acos-social.jpg</div><div style="position:absolute;left:89px;top:105.7px;width:15.5px;height:11px;background:#6fe0c0;border:1.5px solid #e8e8e8;box-shadow:0 1px 1px rgba(0,0,0,0.2)"></div><div style="position:absolute;left:110px;top:102.7px;line-height:18px;font-size:12.75px;color:#222;font-weight:normal;white-space:nowrap;">Cover-Shortcuts.svg</div><div style="position:absolute;left:89px;top:126.69999999999999px;width:15.5px;height:14px;background:linear-gradient(#f0f0f0,#e0e0e0);border:1px solid #d0d0d0;border-radius:1px;box-shadow:0 1px 1px rgba(0,0,0,0.18)"><div style="position:absolute;left:2px;top:2px;width:6px;height:8px;border-left:1px solid #b5b5b5;border-top:1px solid #b5b5b5"></div></div><div style="position:absolute;left:110px;top:124.69999999999999px;line-height:18px;font-size:12.75px;color:#222;font-weight:normal;white-space:nowrap;">Extra-Apple_Menu.png</div><div style="position:absolute;left:89px;top:148.7px;width:15.5px;height:14px;background:#dcdcdc;border:1px solid #cdcdcd;box-shadow:0 1px 1px rgba(0,0,0,0.15)"><div style="position:absolute;left:1px;top:2px;width:11px;height:1px;background:#7383b8"></div></div><div style="position:absolute;left:110px;top:146.7px;line-height:18px;font-size:12.75px;color:#222;font-weight:normal;white-space:nowrap;">Extra-Apple_Menu.webp</div><div style="position:absolute;left:89px;top:171.2px;width:15.5px;height:13px;background:linear-gradient(#f4f4f4,#e2e2e2);border:1px solid #d2d2d2;border-radius:1px;box-shadow:0 1px 1px rgba(0,0,0,0.18)"><div style="position:absolute;left:2px;top:3px;width:9.5px;height:5px;border:1px solid #cfcfcf;background:#fafafa"></div></div><div style="position:absolute;left:110px;top:168.7px;line-height:18px;font-size:12.75px;color:#222;font-weight:normal;white-space:nowrap;">Extra-Spotlight_Search.png</div><div style="position:absolute;left:89px;top:193.2px;width:15.5px;height:13px;background:linear-gradient(#f4f4f4,#e2e2e2);border:1px solid #d2d2d2;border-radius:1px;box-shadow:0 1px 1px rgba(0,0,0,0.18)"><div style="position:absolute;left:2px;top:3px;width:9.5px;height:5px;border:1px solid #cfcfcf;background:#fafafa"></div></div><div style="position:absolute;left:110px;top:190.7px;line-height:18px;font-size:12.75px;color:#222;font-weight:normal;white-space:nowrap;">Extra-Spotlight_Search.webp</div><div style="position:absolute;left:89px;top:215.2px;width:15.5px;height:13px;background:linear-gradient(#f4f4f4,#e2e2e2);border:1px solid #d2d2d2;border-radius:1px;box-shadow:0 1px 1px rgba(0,0,0,0.18)"><div style="position:absolute;left:2px;top:3px;width:9.5px;height:5px;border:1px solid #cfcfcf;background:#fafafa"></div></div><div style="position:absolute;left:110px;top:212.7px;line-height:18px;font-size:12.75px;color:#222;font-weight:normal;white-space:nowrap;">Karabiner_Ele<span style="letter-spacing:-0.55px">...</span>fication_tab.png</div><div style="position:absolute;left:89px;top:237.2px;width:15.5px;height:13px;background:linear-gradient(#f4f4f4,#e2e2e2);border:1px solid #d2d2d2;border-radius:1px;box-shadow:0 1px 1px rgba(0,0,0,0.18)"><div style="position:absolute;left:2px;top:3px;width:9.5px;height:5px;border:1px solid #cfcfcf;background:#fafafa"></div></div><div style="position:absolute;left:110px;top:234.7px;line-height:18px;font-size:12.75px;color:#222;font-weight:normal;white-space:nowrap;">Karabiner_Ele<span style="letter-spacing:-0.55px">...</span>2-Add_rule.png</div><div style="position:absolute;left:89px;top:258.7px;width:15.5px;height:14px;background:linear-gradient(#f0f0f0,#e0e0e0);border:1px solid #d0d0d0;border-radius:1px;box-shadow:0 1px 1px rgba(0,0,0,0.18)"><div style="position:absolute;left:2px;top:2px;width:6px;height:8px;border-left:1px solid #b5b5b5;border-top:1px solid #b5b5b5"></div></div><div style="position:absolute;left:110px;top:256.7px;line-height:18px;font-size:12.75px;color:#222;font-weight:normal;white-space:nowrap;">Keyboard_Pane.webp</div><div style="position:absolute;left:89px;top:281.2px;width:15.5px;height:13px;background:linear-gradient(#f4f4f4,#e2e2e2);border:1px solid #d2d2d2;border-radius:1px;box-shadow:0 1px 1px rgba(0,0,0,0.18)"><div style="position:absolute;left:2px;top:3px;width:9.5px;height:5px;border:1px solid #cfcfcf;background:#fafafa"></div></div><div style="position:absolute;left:110px;top:278.7px;line-height:18px;font-size:12.75px;color:#222;font-weight:normal;white-space:nowrap;">MasOS-Add_S<span style="letter-spacing:-0.55px">...</span>ut_Prompt.png</div><div style="position:absolute;left:89px;top:303.2px;width:15.5px;height:13px;background:linear-gradient(#f4f4f4,#e2e2e2);border:1px solid #d2d2d2;border-radius:1px;box-shadow:0 1px 1px rgba(0,0,0,0.18)"><div style="position:absolute;left:2px;top:3px;width:9.5px;height:5px;border:1px solid #cfcfcf;background:#fafafa"></div></div><div style="position:absolute;left:110px;top:300.7px;line-height:18px;font-size:12.75px;color:#222;font-weight:normal;white-space:nowrap;">MasOS-Filled_Prompt.png</div><div style="position:absolute;left:89px;top:324.7px;width:15.5px;height:14px;background:linear-gradient(#f0f0f0,#e0e0e0);border:1px solid #d0d0d0;border-radius:1px;box-shadow:0 1px 1px rgba(0,0,0,0.18)"><div style="position:absolute;left:2px;top:2px;width:6px;height:8px;border-left:1px solid #b5b5b5;border-top:1px solid #b5b5b5"></div></div><div style="position:absolute;left:110px;top:322.7px;line-height:18px;font-size:12.75px;color:#222;font-weight:normal;white-space:nowrap;">MasOS-Shortc<span style="letter-spacing:-0.55px">...</span>nager_Full.png</div><div style="position:absolute;left:89px;top:346.7px;width:15.5px;height:14px;background:linear-gradient(#f0f0f0,#e0e0e0);border:1px solid #d0d0d0;border-radius:1px;box-shadow:0 1px 1px rgba(0,0,0,0.18)"><div style="position:absolute;left:2px;top:2px;width:6px;height:8px;border-left:1px solid #b5b5b5;border-top:1px solid #b5b5b5"></div></div><div style="position:absolute;left:110px;top:344.7px;line-height:18px;font-size:12.75px;color:#222;font-weight:normal;white-space:nowrap;">MasOS-Shortcut_Manager.png</div><div style="position:absolute;left:89px;top:368.7px;width:15.5px;height:14px;background:linear-gradient(#f0f0f0,#e0e0e0);border:1px solid #d0d0d0;border-radius:1px;box-shadow:0 1px 1px rgba(0,0,0,0.18)"><div style="position:absolute;left:2px;top:2px;width:6px;height:8px;border-left:1px solid #b5b5b5;border-top:1px solid #b5b5b5"></div></div><div style="position:absolute;left:110px;top:366.7px;line-height:18px;font-size:12.75px;color:#222;font-weight:normal;white-space:nowrap;">MasOS-Shortcut_Pick_App.png</div><div style="position:absolute;left:89px;top:392.2px;width:15.5px;height:11px;background:#f2f2f2;border:1px solid #aaa"><div style="position:absolute;left:1px;top:3px;width:6px;height:4px;background:#333"></div><div style="position:absolute;left:7px;top:5px;width:6px;height:2px;background:#333"></div></div><div style="position:absolute;left:110px;top:388.7px;line-height:18px;font-size:12.75px;color:#222;font-weight:normal;white-space:nowrap;">Merge_All_Windows.png</div><div style="position:absolute;left:83px;top:409.2px;width:224px;height:21.5px;border-radius:5px;background:#0a58d0"></div><div style="position:absolute;left:89px;top:414.2px;width:15.5px;height:11px;background:#e9eef8;border:1px solid #cfd8ea"><div style="position:absolute;left:2px;top:2px;width:9px;height:4px;background:#c8d3ea"></div></div><div style="position:absolute;left:110px;top:410.7px;line-height:18px;font-size:12.5px;color:#fff;font-weight:normal;white-space:nowrap;">Merge_All_Windows.webp</div><div style="position:absolute;left:89px;top:435.2px;width:15.5px;height:13px;background:#d8d8d8;border:1px solid #bcbcbc"><div style="position:absolute;left:2.5px;top:2.5px;width:8.5px;height:6px;background:#fafafa;border:1px solid #999"></div></div><div style="position:absolute;left:110px;top:432.7px;line-height:18px;font-size:12.75px;color:#222;font-weight:normal;white-space:nowrap;">Prompt_Window.webp</div><div style="position:absolute;left:89px;top:456.7px;width:15.5px;height:14px;background:#eef0c8;border:1px solid #d5d5b0"></div><div style="position:absolute;left:110px;top:454.7px;line-height:18px;font-size:12.75px;color:#222;font-weight:normal;white-space:nowrap;">shortcuts-for-macos.svg</div><div style="position:absolute;left:318px;top:79px;width:239px;height:386.5px;overflow:hidden;z-index:0"><div style="position:absolute;left:14px;top:80px;width:214px;height:100px"><div style="position:absolute;left:4.2px;top:2.7px;width:88px;height:65.3px;background:#fff;border-radius:2px;box-shadow:0 1px 3px rgba(0,0,0,0.28);overflow:hidden;z-index:1"><div style="position:absolute;left:0;top:0;width:22.0px;height:100%;background:#e4e4e4"></div><div style="position:absolute;left:22.0px;top:0;width:66.0px;height:13.06px;background:#f1f1f1;border-bottom:0.5px solid #e0e0e0"></div><div style="position:absolute;left:2.5px;top:3px;width:1.6px;height:1.6px;border-radius:50%;background:#e06a60"></div><div style="position:absolute;left:4.8px;top:3px;width:1.6px;height:1.6px;border-radius:50%;background:#e8b84a"></div><div style="position:absolute;left:7.1px;top:3px;width:1.6px;height:1.6px;border-radius:50%;background:#6cc060"></div><div style="position:absolute;left:48.4px;top:4.571000000000001px;width:8.8px;height:1.2px;background:#9a9a9a"></div><div style="position:absolute;left:2.5px;top:13.06px;width:1.6px;height:1.6px;background:#9ab4dc"></div><div style="position:absolute;left:5px;top:13.360000000000001px;width:12.100000000000001px;height:1px;background:#a4a4a4"></div><div style="position:absolute;left:2.5px;top:16.66px;width:1.6px;height:1.6px;background:#9ab4dc"></div><div style="position:absolute;left:5px;top:16.96px;width:12.100000000000001px;height:1px;background:#a4a4a4"></div><div style="position:absolute;left:2.5px;top:20.26px;width:1.6px;height:1.6px;background:#9ab4dc"></div><div style="position:absolute;left:5px;top:20.560000000000002px;width:12.100000000000001px;height:1px;background:#a4a4a4"></div><div style="position:absolute;left:2.5px;top:23.86px;width:1.6px;height:1.6px;background:#9ab4dc"></div><div style="position:absolute;left:5px;top:24.16px;width:12.100000000000001px;height:1px;background:#a4a4a4"></div><div style="position:absolute;left:2.5px;top:27.46px;width:1.6px;height:1.6px;background:#9ab4dc"></div><div style="position:absolute;left:5px;top:27.76px;width:12.100000000000001px;height:1px;background:#a4a4a4"></div><div style="position:absolute;left:2.5px;top:31.060000000000002px;width:1.6px;height:1.6px;background:#9ab4dc"></div><div style="position:absolute;left:5px;top:31.360000000000003px;width:12.100000000000001px;height:1px;background:#a4a4a4"></div><div style="position:absolute;left:2.5px;top:34.660000000000004px;width:1.6px;height:1.6px;background:#9ab4dc"></div><div style="position:absolute;left:5px;top:34.96px;width:12.100000000000001px;height:1px;background:#a4a4a4"></div><div style="position:absolute;left:2.5px;top:38.26px;width:1.6px;height:1.6px;background:#9ab4dc"></div><div style="position:absolute;left:5px;top:38.559999999999995px;width:12.100000000000001px;height:1px;background:#a4a4a4"></div><div style="position:absolute;left:2.5px;top:41.86px;width:1.6px;height:1.6px;background:#9ab4dc"></div><div style="position:absolute;left:5px;top:42.16px;width:12.100000000000001px;height:1px;background:#a4a4a4"></div><div style="position:absolute;left:2.5px;top:45.46px;width:1.6px;height:1.6px;background:#9ab4dc"></div><div style="position:absolute;left:5px;top:45.76px;width:12.100000000000001px;height:1px;background:#a4a4a4"></div><div style="position:absolute;left:2.5px;top:49.06px;width:1.6px;height:1.6px;background:#9ab4dc"></div><div style="position:absolute;left:5px;top:49.36px;width:12.100000000000001px;height:1px;background:#a4a4a4"></div><div style="position:absolute;left:25.0px;top:18.284000000000002px;width:1.4px;height:1.4px;background:#9ab4dc"></div><div style="position:absolute;left:27.5px;top:18.484px;width:7.04px;height:1px;background:#9c9c9c"></div><div style="position:absolute;left:25.0px;top:21.384000000000004px;width:1.4px;height:1.4px;background:#9ab4dc"></div><div style="position:absolute;left:27.5px;top:21.584000000000003px;width:7.04px;height:1px;background:#9c9c9c"></div><div style="position:absolute;left:25.0px;top:24.484px;width:1.4px;height:1.4px;background:#9ab4dc"></div><div style="position:absolute;left:27.5px;top:24.684px;width:7.04px;height:1px;background:#9c9c9c"></div><div style="position:absolute;left:25.0px;top:27.584000000000003px;width:1.4px;height:1.4px;background:#9ab4dc"></div><div style="position:absolute;left:27.5px;top:27.784000000000002px;width:7.04px;height:1px;background:#9c9c9c"></div><div style="position:absolute;left:25.0px;top:30.684000000000005px;width:1.4px;height:1.4px;background:#9ab4dc"></div><div style="position:absolute;left:27.5px;top:30.884000000000004px;width:7.04px;height:1px;background:#9c9c9c"></div><div style="position:absolute;left:25.0px;top:33.784000000000006px;width:1.4px;height:1.4px;background:#9ab4dc"></div><div style="position:absolute;left:27.5px;top:33.98400000000001px;width:7.04px;height:1px;background:#9c9c9c"></div><div style="position:absolute;left:25.0px;top:36.884px;width:1.4px;height:1.4px;background:#9ab4dc"></div><div style="position:absolute;left:27.5px;top:37.084px;width:7.04px;height:1px;background:#9c9c9c"></div><div style="position:absolute;left:25.0px;top:39.984px;width:1.4px;height:1.4px;background:#9ab4dc"></div><div style="position:absolute;left:27.5px;top:40.184000000000005px;width:7.04px;height:1px;background:#9c9c9c"></div><div style="position:absolute;left:56.32px;top:18.284000000000002px;width:1.4px;height:1.4px;background:#9ab4dc"></div><div style="position:absolute;left:58.82px;top:18.484px;width:7.92px;height:1px;background:#9c9c9c"></div><div style="position:absolute;left:56.32px;top:21.384000000000004px;width:1.4px;height:1.4px;background:#9ab4dc"></div><div style="position:absolute;left:58.82px;top:21.584000000000003px;width:7.92px;height:1px;background:#9c9c9c"></div><div style="position:absolute;left:56.32px;top:24.484px;width:1.4px;height:1.4px;background:#9ab4dc"></div><div style="position:absolute;left:58.82px;top:24.684px;width:7.92px;height:1px;background:#9c9c9c"></div><div style="position:absolute;left:56.32px;top:27.584000000000003px;width:1.4px;height:1.4px;background:#9ab4dc"></div><div style="position:absolute;left:58.82px;top:27.784000000000002px;width:7.92px;height:1px;background:#9c9c9c"></div><div style="position:absolute;left:56.32px;top:30.684000000000005px;width:1.4px;height:1.4px;background:#9ab4dc"></div><div style="position:absolute;left:58.82px;top:30.884000000000004px;width:7.92px;height:1px;background:#9c9c9c"></div><div style="position:absolute;left:56.32px;top:33.784000000000006px;width:1.4px;height:1.4px;background:#9ab4dc"></div><div style="position:absolute;left:58.82px;top:33.98400000000001px;width:7.92px;height:1px;background:#9c9c9c"></div><div style="position:absolute;left:56.32px;top:36.884px;width:1.4px;height:1.4px;background:#9ab4dc"></div><div style="position:absolute;left:58.82px;top:37.084px;width:7.92px;height:1px;background:#9c9c9c"></div><div style="position:absolute;left:56.32px;top:39.984px;width:1.4px;height:1.4px;background:#9ab4dc"></div><div style="position:absolute;left:58.82px;top:40.184000000000005px;width:7.92px;height:1px;background:#9c9c9c"></div><div style="position:absolute;left:56.32px;top:43.084px;width:1.4px;height:1.4px;background:#9ab4dc"></div><div style="position:absolute;left:58.82px;top:43.284000000000006px;width:7.92px;height:1px;background:#9c9c9c"></div><div style="position:absolute;left:56.32px;top:46.184000000000005px;width:1.4px;height:1.4px;background:#9ab4dc"></div><div style="position:absolute;left:58.82px;top:46.38400000000001px;width:7.92px;height:1px;background:#9c9c9c"></div><div style="position:absolute;left:56.32px;top:49.284000000000006px;width:1.4px;height:1.4px;background:#9ab4dc"></div><div style="position:absolute;left:58.82px;top:49.48400000000001px;width:7.92px;height:1px;background:#9c9c9c"></div><div style="position:absolute;left:56.32px;top:52.384px;width:1.4px;height:1.4px;background:#9ab4dc"></div><div style="position:absolute;left:58.82px;top:52.584px;width:7.92px;height:1px;background:#9c9c9c"></div><div style="position:absolute;left:52.8px;top:13.06px;width:0.5px;height:45.709999999999994px;background:#eee"></div><div style="position:absolute;left:22.0px;top:58.769999999999996px;width:66.0px;height:6.53px;background:#f0f0f0"></div></div><div style="position:absolute;left:13px;top:15px;width:85px;height:73px;background:#fff;border-radius:2px;box-shadow:0 1px 3px rgba(0,0,0,0.28);overflow:hidden;z-index:2"><div style="position:absolute;left:0;top:0;width:21.25px;height:100%;background:#e4e4e4"></div><div style="position:absolute;left:21.25px;top:0;width:63.75px;height:14.600000000000001px;background:#f1f1f1;border-bottom:0.5px solid #e0e0e0"></div><div style="position:absolute;left:2.5px;top:3px;width:1.6px;height:1.6px;border-radius:50%;background:#e06a60"></div><div style="position:absolute;left:4.8px;top:3px;width:1.6px;height:1.6px;border-radius:50%;background:#e8b84a"></div><div style="position:absolute;left:7.1px;top:3px;width:1.6px;height:1.6px;border-radius:50%;background:#6cc060"></div><div style="position:absolute;left:46.75px;top:5.11px;width:8.5px;height:1.2px;background:#9a9a9a"></div><div style="position:absolute;left:2.5px;top:14.600000000000001px;width:1.6px;height:1.6px;background:#9ab4dc"></div><div style="position:absolute;left:5px;top:14.900000000000002px;width:11.687500000000002px;height:1px;background:#a4a4a4"></div><div style="position:absolute;left:2.5px;top:18.200000000000003px;width:1.6px;height:1.6px;background:#9ab4dc"></div><div style="position:absolute;left:5px;top:18.500000000000004px;width:11.687500000000002px;height:1px;background:#a4a4a4"></div><div style="position:absolute;left:2.5px;top:21.8px;width:1.6px;height:1.6px;background:#9ab4dc"></div><div style="position:absolute;left:5px;top:22.1px;width:11.687500000000002px;height:1px;background:#a4a4a4"></div><div style="position:absolute;left:2.5px;top:25.400000000000002px;width:1.6px;height:1.6px;background:#9ab4dc"></div><div style="position:absolute;left:5px;top:25.700000000000003px;width:11.687500000000002px;height:1px;background:#a4a4a4"></div><div style="position:absolute;left:2.5px;top:29.0px;width:1.6px;height:1.6px;background:#9ab4dc"></div><div style="position:absolute;left:5px;top:29.3px;width:11.687500000000002px;height:1px;background:#a4a4a4"></div><div style="position:absolute;left:2.5px;top:32.6px;width:1.6px;height:1.6px;background:#9ab4dc"></div><div style="position:absolute;left:5px;top:32.9px;width:11.687500000000002px;height:1px;background:#a4a4a4"></div><div style="position:absolute;left:2.5px;top:36.2px;width:1.6px;height:1.6px;background:#9ab4dc"></div><div style="position:absolute;left:5px;top:36.5px;width:11.687500000000002px;height:1px;background:#a4a4a4"></div><div style="position:absolute;left:2.5px;top:39.8px;width:1.6px;height:1.6px;background:#9ab4dc"></div><div style="position:absolute;left:5px;top:40.099999999999994px;width:11.687500000000002px;height:1px;background:#a4a4a4"></div><div style="position:absolute;left:2.5px;top:43.400000000000006px;width:1.6px;height:1.6px;background:#9ab4dc"></div><div style="position:absolute;left:5px;top:43.7px;width:11.687500000000002px;height:1px;background:#a4a4a4"></div><div style="position:absolute;left:2.5px;top:47.0px;width:1.6px;height:1.6px;background:#9ab4dc"></div><div style="position:absolute;left:5px;top:47.3px;width:11.687500000000002px;height:1px;background:#a4a4a4"></div><div style="position:absolute;left:2.5px;top:50.6px;width:1.6px;height:1.6px;background:#9ab4dc"></div><div style="position:absolute;left:5px;top:50.9px;width:11.687500000000002px;height:1px;background:#a4a4a4"></div><div style="position:absolute;left:24.25px;top:20.44px;width:1.4px;height:1.4px;background:#9ab4dc"></div><div style="position:absolute;left:26.75px;top:20.64px;width:6.8px;height:1px;background:#9c9c9c"></div><div style="position:absolute;left:24.25px;top:23.540000000000003px;width:1.4px;height:1.4px;background:#9ab4dc"></div><div style="position:absolute;left:26.75px;top:23.740000000000002px;width:6.8px;height:1px;background:#9c9c9c"></div><div style="position:absolute;left:24.25px;top:26.64px;width:1.4px;height:1.4px;background:#9ab4dc"></div><div style="position:absolute;left:26.75px;top:26.84px;width:6.8px;height:1px;background:#9c9c9c"></div><div style="position:absolute;left:24.25px;top:29.740000000000002px;width:1.4px;height:1.4px;background:#9ab4dc"></div><div style="position:absolute;left:26.75px;top:29.94px;width:6.8px;height:1px;background:#9c9c9c"></div><div style="position:absolute;left:24.25px;top:32.84px;width:1.4px;height:1.4px;background:#9ab4dc"></div><div style="position:absolute;left:26.75px;top:33.040000000000006px;width:6.8px;height:1px;background:#9c9c9c"></div><div style="position:absolute;left:24.25px;top:35.94px;width:1.4px;height:1.4px;background:#9ab4dc"></div><div style="position:absolute;left:26.75px;top:36.14px;width:6.8px;height:1px;background:#9c9c9c"></div><div style="position:absolute;left:24.25px;top:39.040000000000006px;width:1.4px;height:1.4px;background:#9ab4dc"></div><div style="position:absolute;left:26.75px;top:39.24000000000001px;width:6.8px;height:1px;background:#9c9c9c"></div><div style="position:absolute;left:24.25px;top:42.14px;width:1.4px;height:1.4px;background:#9ab4dc"></div><div style="position:absolute;left:26.75px;top:42.34px;width:6.8px;height:1px;background:#9c9c9c"></div><div style="position:absolute;left:54.4px;top:20.44px;width:1.4px;height:1.4px;background:#9ab4dc"></div><div style="position:absolute;left:56.9px;top:20.64px;width:7.6499999999999995px;height:1px;background:#9c9c9c"></div><div style="position:absolute;left:54.4px;top:23.540000000000003px;width:1.4px;height:1.4px;background:#9ab4dc"></div><div style="position:absolute;left:56.9px;top:23.740000000000002px;width:7.6499999999999995px;height:1px;background:#9c9c9c"></div><div style="position:absolute;left:54.4px;top:26.64px;width:1.4px;height:1.4px;background:#9ab4dc"></div><div style="position:absolute;left:56.9px;top:26.84px;width:7.6499999999999995px;height:1px;background:#9c9c9c"></div><div style="position:absolute;left:54.4px;top:29.740000000000002px;width:1.4px;height:1.4px;background:#9ab4dc"></div><div style="position:absolute;left:56.9px;top:29.94px;width:7.6499999999999995px;height:1px;background:#9c9c9c"></div><div style="position:absolute;left:54.4px;top:32.84px;width:1.4px;height:1.4px;background:#9ab4dc"></div><div style="position:absolute;left:56.9px;top:33.040000000000006px;width:7.6499999999999995px;height:1px;background:#9c9c9c"></div><div style="position:absolute;left:54.4px;top:35.94px;width:1.4px;height:1.4px;background:#9ab4dc"></div><div style="position:absolute;left:56.9px;top:36.14px;width:7.6499999999999995px;height:1px;background:#9c9c9c"></div><div style="position:absolute;left:54.4px;top:39.040000000000006px;width:1.4px;height:1.4px;background:#9ab4dc"></div><div style="position:absolute;left:56.9px;top:39.24000000000001px;width:7.6499999999999995px;height:1px;background:#9c9c9c"></div><div style="position:absolute;left:54.4px;top:42.14px;width:1.4px;height:1.4px;background:#9ab4dc"></div><div style="position:absolute;left:56.9px;top:42.34px;width:7.6499999999999995px;height:1px;background:#9c9c9c"></div><div style="position:absolute;left:54.4px;top:45.24px;width:1.4px;height:1.4px;background:#9ab4dc"></div><div style="position:absolute;left:56.9px;top:45.440000000000005px;width:7.6499999999999995px;height:1px;background:#9c9c9c"></div><div style="position:absolute;left:54.4px;top:48.34px;width:1.4px;height:1.4px;background:#9ab4dc"></div><div style="position:absolute;left:56.9px;top:48.540000000000006px;width:7.6499999999999995px;height:1px;background:#9c9c9c"></div><div style="position:absolute;left:54.4px;top:51.44px;width:1.4px;height:1.4px;background:#9ab4dc"></div><div style="position:absolute;left:56.9px;top:51.64px;width:7.6499999999999995px;height:1px;background:#9c9c9c"></div><div style="position:absolute;left:54.4px;top:54.540000000000006px;width:1.4px;height:1.4px;background:#9ab4dc"></div><div style="position:absolute;left:56.9px;top:54.74000000000001px;width:7.6499999999999995px;height:1px;background:#9c9c9c"></div><div style="position:absolute;left:51.0px;top:14.600000000000001px;width:0.5px;height:51.099999999999994px;background:#eee"></div><div style="position:absolute;left:21.25px;top:65.7px;width:63.75px;height:7.300000000000001px;background:#f0f0f0"></div></div><div style="position:absolute;left:26.5px;top:26px;width:101.5px;height:67.8px;background:#fff;border-radius:2px;box-shadow:0 1px 3px rgba(0,0,0,0.28);overflow:hidden;z-index:3"><div style="position:absolute;left:0;top:0;width:25.375px;height:100%;background:#e4e4e4"></div><div style="position:absolute;left:25.375px;top:0;width:76.125px;height:13.56px;background:#f1f1f1;border-bottom:0.5px solid #e0e0e0"></div><div style="position:absolute;left:2.5px;top:3px;width:1.6px;height:1.6px;border-radius:50%;background:#e06a60"></div><div style="position:absolute;left:4.8px;top:3px;width:1.6px;height:1.6px;border-radius:50%;background:#e8b84a"></div><div style="position:absolute;left:7.1px;top:3px;width:1.6px;height:1.6px;border-radius:50%;background:#6cc060"></div><div style="position:absolute;left:55.825px;top:4.746px;width:10.15px;height:1.2px;background:#9a9a9a"></div><div style="position:absolute;left:2.5px;top:13.56px;width:1.6px;height:1.6px;background:#9ab4dc"></div><div style="position:absolute;left:5px;top:13.860000000000001px;width:13.95625px;height:1px;background:#a4a4a4"></div><div style="position:absolute;left:2.5px;top:17.16px;width:1.6px;height:1.6px;background:#9ab4dc"></div><div style="position:absolute;left:5px;top:17.46px;width:13.95625px;height:1px;background:#a4a4a4"></div><div style="position:absolute;left:2.5px;top:20.76px;width:1.6px;height:1.6px;background:#9ab4dc"></div><div style="position:absolute;left:5px;top:21.060000000000002px;width:13.95625px;height:1px;background:#a4a4a4"></div><div style="position:absolute;left:2.5px;top:24.36px;width:1.6px;height:1.6px;background:#9ab4dc"></div><div style="position:absolute;left:5px;top:24.66px;width:13.95625px;height:1px;background:#a4a4a4"></div><div style="position:absolute;left:2.5px;top:27.96px;width:1.6px;height:1.6px;background:#9ab4dc"></div><div style="position:absolute;left:5px;top:28.26px;width:13.95625px;height:1px;background:#a4a4a4"></div><div style="position:absolute;left:2.5px;top:31.560000000000002px;width:1.6px;height:1.6px;background:#9ab4dc"></div><div style="position:absolute;left:5px;top:31.860000000000003px;width:13.95625px;height:1px;background:#a4a4a4"></div><div style="position:absolute;left:2.5px;top:35.160000000000004px;width:1.6px;height:1.6px;background:#9ab4dc"></div><div style="position:absolute;left:5px;top:35.46px;width:13.95625px;height:1px;background:#a4a4a4"></div><div style="position:absolute;left:2.5px;top:38.76px;width:1.6px;height:1.6px;background:#9ab4dc"></div><div style="position:absolute;left:5px;top:39.059999999999995px;width:13.95625px;height:1px;background:#a4a4a4"></div><div style="position:absolute;left:2.5px;top:42.36px;width:1.6px;height:1.6px;background:#9ab4dc"></div><div style="position:absolute;left:5px;top:42.66px;width:13.95625px;height:1px;background:#a4a4a4"></div><div style="position:absolute;left:2.5px;top:45.96px;width:1.6px;height:1.6px;background:#9ab4dc"></div><div style="position:absolute;left:5px;top:46.26px;width:13.95625px;height:1px;background:#a4a4a4"></div><div style="position:absolute;left:2.5px;top:49.56px;width:1.6px;height:1.6px;background:#9ab4dc"></div><div style="position:absolute;left:5px;top:49.86px;width:13.95625px;height:1px;background:#a4a4a4"></div><div style="position:absolute;left:28.375px;top:18.984px;width:1.4px;height:1.4px;background:#9ab4dc"></div><div style="position:absolute;left:30.875px;top:19.184px;width:8.120000000000001px;height:1px;background:#9c9c9c"></div><div style="position:absolute;left:28.375px;top:22.084000000000003px;width:1.4px;height:1.4px;background:#9ab4dc"></div><div style="position:absolute;left:30.875px;top:22.284000000000002px;width:8.120000000000001px;height:1px;background:#9c9c9c"></div><div style="position:absolute;left:28.375px;top:25.184px;width:1.4px;height:1.4px;background:#9ab4dc"></div><div style="position:absolute;left:30.875px;top:25.384px;width:8.120000000000001px;height:1px;background:#9c9c9c"></div><div style="position:absolute;left:28.375px;top:28.284000000000002px;width:1.4px;height:1.4px;background:#9ab4dc"></div><div style="position:absolute;left:30.875px;top:28.484px;width:8.120000000000001px;height:1px;background:#9c9c9c"></div><div style="position:absolute;left:28.375px;top:31.384px;width:1.4px;height:1.4px;background:#9ab4dc"></div><div style="position:absolute;left:30.875px;top:31.584px;width:8.120000000000001px;height:1px;background:#9c9c9c"></div><div style="position:absolute;left:28.375px;top:34.484px;width:1.4px;height:1.4px;background:#9ab4dc"></div><div style="position:absolute;left:30.875px;top:34.684000000000005px;width:8.120000000000001px;height:1px;background:#9c9c9c"></div><div style="position:absolute;left:28.375px;top:37.584px;width:1.4px;height:1.4px;background:#9ab4dc"></div><div style="position:absolute;left:30.875px;top:37.784000000000006px;width:8.120000000000001px;height:1px;background:#9c9c9c"></div><div style="position:absolute;left:28.375px;top:40.684px;width:1.4px;height:1.4px;background:#9ab4dc"></div><div style="position:absolute;left:30.875px;top:40.884px;width:8.120000000000001px;height:1px;background:#9c9c9c"></div><div style="position:absolute;left:64.96000000000001px;top:18.984px;width:1.4px;height:1.4px;background:#9ab4dc"></div><div style="position:absolute;left:67.46000000000001px;top:19.184px;width:9.135px;height:1px;background:#9c9c9c"></div><div style="position:absolute;left:64.96000000000001px;top:22.084000000000003px;width:1.4px;height:1.4px;background:#9ab4dc"></div><div style="position:absolute;left:67.46000000000001px;top:22.284000000000002px;width:9.135px;height:1px;background:#9c9c9c"></div><div style="position:absolute;left:64.96000000000001px;top:25.184px;width:1.4px;height:1.4px;background:#9ab4dc"></div><div style="position:absolute;left:67.46000000000001px;top:25.384px;width:9.135px;height:1px;background:#9c9c9c"></div><div style="position:absolute;left:64.96000000000001px;top:28.284000000000002px;width:1.4px;height:1.4px;background:#9ab4dc"></div><div style="position:absolute;left:67.46000000000001px;top:28.484px;width:9.135px;height:1px;background:#9c9c9c"></div><div style="position:absolute;left:64.96000000000001px;top:31.384px;width:1.4px;height:1.4px;background:#9ab4dc"></div><div style="position:absolute;left:67.46000000000001px;top:31.584px;width:9.135px;height:1px;background:#9c9c9c"></div><div style="position:absolute;left:64.96000000000001px;top:34.484px;width:1.4px;height:1.4px;background:#9ab4dc"></div><div style="position:absolute;left:67.46000000000001px;top:34.684000000000005px;width:9.135px;height:1px;background:#9c9c9c"></div><div style="position:absolute;left:64.96000000000001px;top:37.584px;width:1.4px;height:1.4px;background:#9ab4dc"></div><div style="position:absolute;left:67.46000000000001px;top:37.784000000000006px;width:9.135px;height:1px;background:#9c9c9c"></div><div style="position:absolute;left:64.96000000000001px;top:40.684px;width:1.4px;height:1.4px;background:#9ab4dc"></div><div style="position:absolute;left:67.46000000000001px;top:40.884px;width:9.135px;height:1px;background:#9c9c9c"></div><div style="position:absolute;left:64.96000000000001px;top:43.784000000000006px;width:1.4px;height:1.4px;background:#9ab4dc"></div><div style="position:absolute;left:67.46000000000001px;top:43.98400000000001px;width:9.135px;height:1px;background:#9c9c9c"></div><div style="position:absolute;left:64.96000000000001px;top:46.884px;width:1.4px;height:1.4px;background:#9ab4dc"></div><div style="position:absolute;left:67.46000000000001px;top:47.084px;width:9.135px;height:1px;background:#9c9c9c"></div><div style="position:absolute;left:64.96000000000001px;top:49.984px;width:1.4px;height:1.4px;background:#9ab4dc"></div><div style="position:absolute;left:67.46000000000001px;top:50.184000000000005px;width:9.135px;height:1px;background:#9c9c9c"></div><div style="position:absolute;left:64.96000000000001px;top:53.084px;width:1.4px;height:1.4px;background:#9ab4dc"></div><div style="position:absolute;left:67.46000000000001px;top:53.284000000000006px;width:9.135px;height:1px;background:#9c9c9c"></div><div style="position:absolute;left:60.9px;top:13.56px;width:0.5px;height:47.459999999999994px;background:#eee"></div><div style="position:absolute;left:25.375px;top:61.019999999999996px;width:76.125px;height:6.78px;background:#f0f0f0"></div><div style="position:absolute;left:26.875px;top:25.8px;width:33.495000000000005px;height:2.6px;background:#1d55c0"></div></div><div style="position:absolute;left:106.3px;top:3.5px;width:100.7px;height:70.5px;background:#fff;border-radius:2px;box-shadow:0 1px 3px rgba(0,0,0,0.28);overflow:hidden;z-index:4"><div style="position:absolute;left:0;top:0;width:25.175px;height:100%;background:#e4e4e4"></div><div style="position:absolute;left:25.175px;top:0;width:75.525px;height:14.100000000000001px;background:#f1f1f1;border-bottom:0.5px solid #e0e0e0"></div><div style="position:absolute;left:2.5px;top:3px;width:1.6px;height:1.6px;border-radius:50%;background:#e06a60"></div><div style="position:absolute;left:4.8px;top:3px;width:1.6px;height:1.6px;border-radius:50%;background:#e8b84a"></div><div style="position:absolute;left:7.1px;top:3px;width:1.6px;height:1.6px;border-radius:50%;background:#6cc060"></div><div style="position:absolute;left:55.385000000000005px;top:4.9350000000000005px;width:10.07px;height:1.2px;background:#9a9a9a"></div><div style="position:absolute;left:2.5px;top:14.100000000000001px;width:1.6px;height:1.6px;background:#9ab4dc"></div><div style="position:absolute;left:5px;top:14.400000000000002px;width:13.846250000000001px;height:1px;background:#a4a4a4"></div><div style="position:absolute;left:2.5px;top:17.700000000000003px;width:1.6px;height:1.6px;background:#9ab4dc"></div><div style="position:absolute;left:5px;top:18.000000000000004px;width:13.846250000000001px;height:1px;background:#a4a4a4"></div><div style="position:absolute;left:2.5px;top:21.3px;width:1.6px;height:1.6px;background:#9ab4dc"></div><div style="position:absolute;left:5px;top:21.6px;width:13.846250000000001px;height:1px;background:#a4a4a4"></div><div style="position:absolute;left:2.5px;top:24.900000000000002px;width:1.6px;height:1.6px;background:#9ab4dc"></div><div style="position:absolute;left:5px;top:25.200000000000003px;width:13.846250000000001px;height:1px;background:#a4a4a4"></div><div style="position:absolute;left:2.5px;top:28.5px;width:1.6px;height:1.6px;background:#9ab4dc"></div><div style="position:absolute;left:5px;top:28.8px;width:13.846250000000001px;height:1px;background:#a4a4a4"></div><div style="position:absolute;left:2.5px;top:32.1px;width:1.6px;height:1.6px;background:#9ab4dc"></div><div style="position:absolute;left:5px;top:32.4px;width:13.846250000000001px;height:1px;background:#a4a4a4"></div><div style="position:absolute;left:2.5px;top:35.7px;width:1.6px;height:1.6px;background:#9ab4dc"></div><div style="position:absolute;left:5px;top:36.0px;width:13.846250000000001px;height:1px;background:#a4a4a4"></div><div style="position:absolute;left:2.5px;top:39.3px;width:1.6px;height:1.6px;background:#9ab4dc"></div><div style="position:absolute;left:5px;top:39.599999999999994px;width:13.846250000000001px;height:1px;background:#a4a4a4"></div><div style="position:absolute;left:2.5px;top:42.900000000000006px;width:1.6px;height:1.6px;background:#9ab4dc"></div><div style="position:absolute;left:5px;top:43.2px;width:13.846250000000001px;height:1px;background:#a4a4a4"></div><div style="position:absolute;left:2.5px;top:46.5px;width:1.6px;height:1.6px;background:#9ab4dc"></div><div style="position:absolute;left:5px;top:46.8px;width:13.846250000000001px;height:1px;background:#a4a4a4"></div><div style="position:absolute;left:2.5px;top:50.1px;width:1.6px;height:1.6px;background:#9ab4dc"></div><div style="position:absolute;left:5px;top:50.4px;width:13.846250000000001px;height:1px;background:#a4a4a4"></div><div style="position:absolute;left:28.175px;top:19.740000000000002px;width:1.4px;height:1.4px;background:#9ab4dc"></div><div style="position:absolute;left:30.675px;top:19.94px;width:8.056000000000001px;height:1px;background:#9c9c9c"></div><div style="position:absolute;left:28.175px;top:22.840000000000003px;width:1.4px;height:1.4px;background:#9ab4dc"></div><div style="position:absolute;left:30.675px;top:23.040000000000003px;width:8.056000000000001px;height:1px;background:#9c9c9c"></div><div style="position:absolute;left:28.175px;top:25.94px;width:1.4px;height:1.4px;background:#9ab4dc"></div><div style="position:absolute;left:30.675px;top:26.14px;width:8.056000000000001px;height:1px;background:#9c9c9c"></div><div style="position:absolute;left:28.175px;top:29.040000000000003px;width:1.4px;height:1.4px;background:#9ab4dc"></div><div style="position:absolute;left:30.675px;top:29.240000000000002px;width:8.056000000000001px;height:1px;background:#9c9c9c"></div><div style="position:absolute;left:28.175px;top:32.14px;width:1.4px;height:1.4px;background:#9ab4dc"></div><div style="position:absolute;left:30.675px;top:32.34px;width:8.056000000000001px;height:1px;background:#9c9c9c"></div><div style="position:absolute;left:28.175px;top:35.24px;width:1.4px;height:1.4px;background:#9ab4dc"></div><div style="position:absolute;left:30.675px;top:35.440000000000005px;width:8.056000000000001px;height:1px;background:#9c9c9c"></div><div style="position:absolute;left:28.175px;top:38.34px;width:1.4px;height:1.4px;background:#9ab4dc"></div><div style="position:absolute;left:30.675px;top:38.540000000000006px;width:8.056000000000001px;height:1px;background:#9c9c9c"></div><div style="position:absolute;left:28.175px;top:41.44px;width:1.4px;height:1.4px;background:#9ab4dc"></div><div style="position:absolute;left:30.675px;top:41.64px;width:8.056000000000001px;height:1px;background:#9c9c9c"></div><div style="position:absolute;left:64.44800000000001px;top:19.740000000000002px;width:1.4px;height:1.4px;background:#9ab4dc"></div><div style="position:absolute;left:66.94800000000001px;top:19.94px;width:9.063px;height:1px;background:#9c9c9c"></div><div style="position:absolute;left:64.44800000000001px;top:22.840000000000003px;width:1.4px;height:1.4px;background:#9ab4dc"></div><div style="position:absolute;left:66.94800000000001px;top:23.040000000000003px;width:9.063px;height:1px;background:#9c9c9c"></div><div style="position:absolute;left:64.44800000000001px;top:25.94px;width:1.4px;height:1.4px;background:#9ab4dc"></div><div style="position:absolute;left:66.94800000000001px;top:26.14px;width:9.063px;height:1px;background:#9c9c9c"></div><div style="position:absolute;left:64.44800000000001px;top:29.040000000000003px;width:1.4px;height:1.4px;background:#9ab4dc"></div><div style="position:absolute;left:66.94800000000001px;top:29.240000000000002px;width:9.063px;height:1px;background:#9c9c9c"></div><div style="position:absolute;left:64.44800000000001px;top:32.14px;width:1.4px;height:1.4px;background:#9ab4dc"></div><div style="position:absolute;left:66.94800000000001px;top:32.34px;width:9.063px;height:1px;background:#9c9c9c"></div><div style="position:absolute;left:64.44800000000001px;top:35.24px;width:1.4px;height:1.4px;background:#9ab4dc"></div><div style="position:absolute;left:66.94800000000001px;top:35.440000000000005px;width:9.063px;height:1px;background:#9c9c9c"></div><div style="position:absolute;left:64.44800000000001px;top:38.34px;width:1.4px;height:1.4px;background:#9ab4dc"></div><div style="position:absolute;left:66.94800000000001px;top:38.540000000000006px;width:9.063px;height:1px;background:#9c9c9c"></div><div style="position:absolute;left:64.44800000000001px;top:41.44px;width:1.4px;height:1.4px;background:#9ab4dc"></div><div style="position:absolute;left:66.94800000000001px;top:41.64px;width:9.063px;height:1px;background:#9c9c9c"></div><div style="position:absolute;left:64.44800000000001px;top:44.540000000000006px;width:1.4px;height:1.4px;background:#9ab4dc"></div><div style="position:absolute;left:66.94800000000001px;top:44.74000000000001px;width:9.063px;height:1px;background:#9c9c9c"></div><div style="position:absolute;left:64.44800000000001px;top:47.64px;width:1.4px;height:1.4px;background:#9ab4dc"></div><div style="position:absolute;left:66.94800000000001px;top:47.84px;width:9.063px;height:1px;background:#9c9c9c"></div><div style="position:absolute;left:64.44800000000001px;top:50.74px;width:1.4px;height:1.4px;background:#9ab4dc"></div><div style="position:absolute;left:66.94800000000001px;top:50.940000000000005px;width:9.063px;height:1px;background:#9c9c9c"></div><div style="position:absolute;left:60.42px;top:14.100000000000001px;width:0.5px;height:49.349999999999994px;background:#eee"></div><div style="position:absolute;left:25.175px;top:63.45px;width:75.525px;height:7.050000000000001px;background:#f0f0f0"></div><div style="position:absolute;left:26.675px;top:26.5px;width:33.231px;height:2.6px;background:#1d55c0"></div></div><svg style="position:absolute;left:0;top:0;z-index:5" width="220" height="110" viewBox="0 0 220 110" fill="none"><g stroke="#a63a3a" stroke-width="0.7" fill="none" stroke-linecap="round"><path d="M142 55C128 72 98 74 52 14"/><path d="M141 56C124 73 94 72 53.7 22.3"/><path d="M120 66C104 60 88 46 74 33"/><path d="M52 14L56 15.5M52 14L52.5 18"/><path d="M53.7 22.3L57.5 23.5M53.7 22.3L54 26"/><path d="M74 33L77.5 33.5M74 33L74.5 36.5"/></g><text x="27" y="25" font-size="6.5" fill="#a63a3a" font-style="italic" font-weight="bold" transform="rotate(-18 27 25)" font-family="Liberation Serif">Before</text><text x="136" y="52" font-size="6.5" fill="#a63a3a" font-style="italic" font-weight="bold" transform="rotate(-25 136 52)" font-family="Liberation Serif">After</text></svg></div></div><div style="position:absolute;left:328.5px;top:357.5px;line-height:18px;font-size:15px;color:#1e1e1e;font-weight:bold;white-space:nowrap;">Merge_All_Windows.webp</div><div style="position:absolute;left:328.5px;top:378px;line-height:18px;font-size:13px;color:#8a8a8a;font-weight:normal;white-space:nowrap;">WebP Image - 183 KB</div><div style="position:absolute;left:318px;top:395px;width:239px;height:1px;background:#e6e6e6"></div><svg style="position:absolute;left:354.5px;top:411.5px;" width="13" height="16" viewBox="0 0 13 16" fill="none"><path d="M1.5 1H7.5L11.5 5V14.2A0.8 0.8 0 0 1 10.7 15H2.3A0.8 0.8 0 0 1 1.5 14.2Z M7.5 1V5H11.5" stroke="#7a7a7a" stroke-width="1.1" stroke-linejoin="round" fill="none"/></svg><svg style="position:absolute;left:428px;top:412px;" width="18" height="15" viewBox="0 0 18 15" fill="none"><rect x="3.5" y="4" width="13.5" height="10" rx="1.5" stroke="#7a7a7a" stroke-width="1.1"/><path d="M1 11V2.5A1.2 1.2 0 0 1 2.2 1.3H14" stroke="#7a7a7a" stroke-width="1.1"/><path d="M4.5 13L8.5 8.5L11 11L13 9.5L16 13Z" fill="#7a7a7a"/><circle cx="12.5" cy="6.8" r="1" fill="#7a7a7a"/></svg><svg style="position:absolute;left:506.5px;top:412px;" width="15" height="15" viewBox="0 0 15 15" fill="none"><circle cx="7.5" cy="7.5" r="6.8" stroke="#7a7a7a" stroke-width="1.1"/><circle cx="4.5" cy="7.5" r="0.9" fill="#7a7a7a"/><circle cx="7.5" cy="7.5" r="0.9" fill="#7a7a7a"/><circle cx="10.5" cy="7.5" r="0.9" fill="#7a7a7a"/></svg><div style="position:absolute;left:321px;top:436.5px;width:80px;text-align:center;font-size:11.3px;line-height:14px;color:#7d7d7d">Create PDF</div><div style="position:absolute;left:397px;top:436.5px;width:80px;text-align:center;font-size:11.3px;line-height:14px;color:#7d7d7d">Convert<br>Image</div><div style="position:absolute;left:473px;top:436.5px;width:80px;text-align:center;font-size:11.3px;line-height:14px;color:#7d7d7d">More…</div><div style="position:absolute;left:0;top:465.5px;width:100%;height:28px;background:#fbfbfb;border-top:1px solid #e6e6e6"><div style="position:absolute;left:14px;top:7.5px;width:12px;height:13px;background:linear-gradient(#8a8a8a,#4a4a4a);border-radius:2px"><div style="position:absolute;left:1px;top:1px;width:10px;height:9px;background:linear-gradient(#d8d8d8,#9a9a9a);border-radius:1px"></div></div><div style="position:absolute;left:31px;top:5px;width:30px;overflow:hidden;font-size:11.6px;line-height:18px;color:#8a8a8a;white-space:nowrap;-webkit-mask-image:linear-gradient(90deg,#000 70%,transparent)">Macintosh</div><svg style="position:absolute;left:62px;top:9.5px;" width="6" height="9" viewBox="0 0 6 9" fill="none"><path d="M2 2.2L4.3 4.5L2 6.8" stroke="#7a7a7a" stroke-width="1.2" stroke-linecap="round" stroke-linejoin="round"/></svg><div style="position:absolute;left:74px;top:8.5px;width:12.5px;height:12px"><div style="position:absolute;left:0;top:0;width:5.625px;height:3px;background:#48a8e6;border-radius:1px 2px 0 0"></div><div style="position:absolute;left:0;top:1.5px;width:12.5px;height:10.5px;background:#64b9ef;border-radius:1.5px;border-top:1.5px solid #4aa6e2"></div></div><svg style="position:absolute;left:92px;top:9.5px;" width="6" height="9" viewBox="0 0 6 9" fill="none"><path d="M2 2.2L4.3 4.5L2 6.8" stroke="#7a7a7a" stroke-width="1.2" stroke-linecap="round" stroke-linejoin="round"/></svg><div style="position:absolute;left:103px;top:8.5px;width:12.5px;height:12px"><div style="position:absolute;left:0;top:0;width:5.625px;height:3px;background:#48a8e6;border-radius:1px 2px 0 0"></div><div style="position:absolute;left:0;top:1.5px;width:12.5px;height:10.5px;background:#64b9ef;border-radius:1.5px;border-top:1.5px solid #4aa6e2"></div></div><svg style="position:absolute;left:121px;top:9.5px;" width="6" height="9" viewBox="0 0 6 9" fill="none"><path d="M2 2.2L4.3 4.5L2 6.8" stroke="#7a7a7a" stroke-width="1.2" stroke-linecap="round" stroke-linejoin="round"/></svg><div style="position:absolute;left:132px;top:8.5px;width:12.5px;height:12px"><div style="position:absolute;left:0;top:0;width:5.625px;height:3px;background:#48a8e6;border-radius:1px 2px 0 0"></div><div style="position:absolute;left:0;top:1.5px;width:12.5px;height:10.5px;background:#64b9ef;border-radius:1.5px;border-top:1.5px solid #4aa6e2"></div></div><svg style="position:absolute;left:150px;top:9.5px;" width="6" height="9" viewBox="0 0 6 9" fill="none"><path d="M2 2.2L4.3 4.5L2 6.8" stroke="#7a7a7a" stroke-width="1.2" stroke-linecap="round" stroke-linejoin="round"/></svg><div style="position:absolute;left:161px;top:8.5px;width:12.5px;height:12px"><div style="position:absolute;left:0;top:0;width:5.625px;height:3px;background:#48a8e6;border-radius:1px 2px 0 0"></div><div style="position:absolute;left:0;top:1.5px;width:12.5px;height:10.5px;background:#64b9ef;border-radius:1.5px;border-top:1.5px solid #4aa6e2"></div></div><svg style="position:absolute;left:179px;top:9.5px;" width="6" height="9" viewBox="0 0 6 9" fill="none"><path d="M2 2.2L4.3 4.5L2 6.8" stroke="#7a7a7a" stroke-width="1.2" stroke-linecap="round" stroke-linejoin="round"/></svg><div style="position:absolute;left:190px;top:8.5px;width:12.5px;height:12px"><div style="position:absolute;left:0;top:0;width:5.625px;height:3px;background:#48a8e6;border-radius:1px 2px 0 0"></div><div style="position:absolute;left:0;top:1.5px;width:12.5px;height:10.5px;background:#64b9ef;border-radius:1.5px;border-top:1.5px solid #4aa6e2"></div></div><svg style="position:absolute;left:208px;top:9.5px;" width="6" height="9" viewBox="0 0 6 9" fill="none"><path d="M2 2.2L4.3 4.5L2 6.8" stroke="#7a7a7a" stroke-width="1.2" stroke-linecap="round" stroke-linejoin="round"/></svg><div style="position:absolute;left:219px;top:8.5px;width:12.5px;height:12px"><div style="position:absolute;left:0;top:0;width:5.625px;height:3px;background:#48a8e6;border-radius:1px 2px 0 0"></div><div style="position:absolute;left:0;top:1.5px;width:12.5px;height:10.5px;background:#64b9ef;border-radius:1.5px;border-top:1.5px solid #4aa6e2"></div></div><svg style="position:absolute;left:237px;top:9.5px;" width="6" height="9" viewBox="0 0 6 9" fill="none"><path d="M2 2.2L4.3 4.5L2 6.8" stroke="#7a7a7a" stroke-width="1.2" stroke-linecap="round" stroke-linejoin="round"/></svg><div style="position:absolute;left:248px;top:8.5px;width:12.5px;height:12px"><div style="position:absolute;left:0;top:0;width:5.625px;height:3px;background:#48a8e6;border-radius:1px 2px 0 0"></div><div style="position:absolute;left:0;top:1.5px;width:12.5px;height:10.5px;background:#64b9ef;border-radius:1.5px;border-top:1.5px solid #4aa6e2"></div></div><div style="position:absolute;left:265.5px;top:5px;line-height:18px;font-size:11.6px;color:#8a8a8a;font-weight:normal;white-space:nowrap;">shortcuts-for-macos</div><svg style="position:absolute;left:377px;top:9.5px;" width="6" height="9" viewBox="0 0 6 9" fill="none"><path d="M2 2.2L4.3 4.5L2 6.8" stroke="#7a7a7a" stroke-width="1.2" stroke-linecap="round" stroke-linejoin="round"/></svg><div style="position:absolute;left:391.5px;top:8px;width:9px;height:12px;background:#f7f7f7;border:1px solid #d5d5d5"><div style="position:absolute;left:1.5px;top:4px;width:5px;height:3px;background:#4b5c9a"></div></div><div style="position:absolute;left:407px;top:5px;line-height:18px;font-size:11.6px;color:#8a8a8a;font-weight:normal;white-space:nowrap;">Merge_All_Windows.webp</div></div><div style="position:absolute;left:0;top:493.5px;width:100%;height:27px;background:#ececec;border-top:1px solid #e2e2e2;text-align:center;line-height:27px;font-size:11.8px;color:#6a6a6a">1 of 25 selected, 121.76 GB available</div></div></div>
<svg style="position:absolute;left:888px;top:385px;z-index:60" width="18" height="26" viewBox="0 0 18 26"><path d="M2 2V19.8L6 16L9.2 23L12.5 21.5L9.5 14.8H15.5Z" fill="#fff" stroke="#1a1a1a" stroke-width="1.4" stroke-linejoin="round"/></svg>
</body></html>
